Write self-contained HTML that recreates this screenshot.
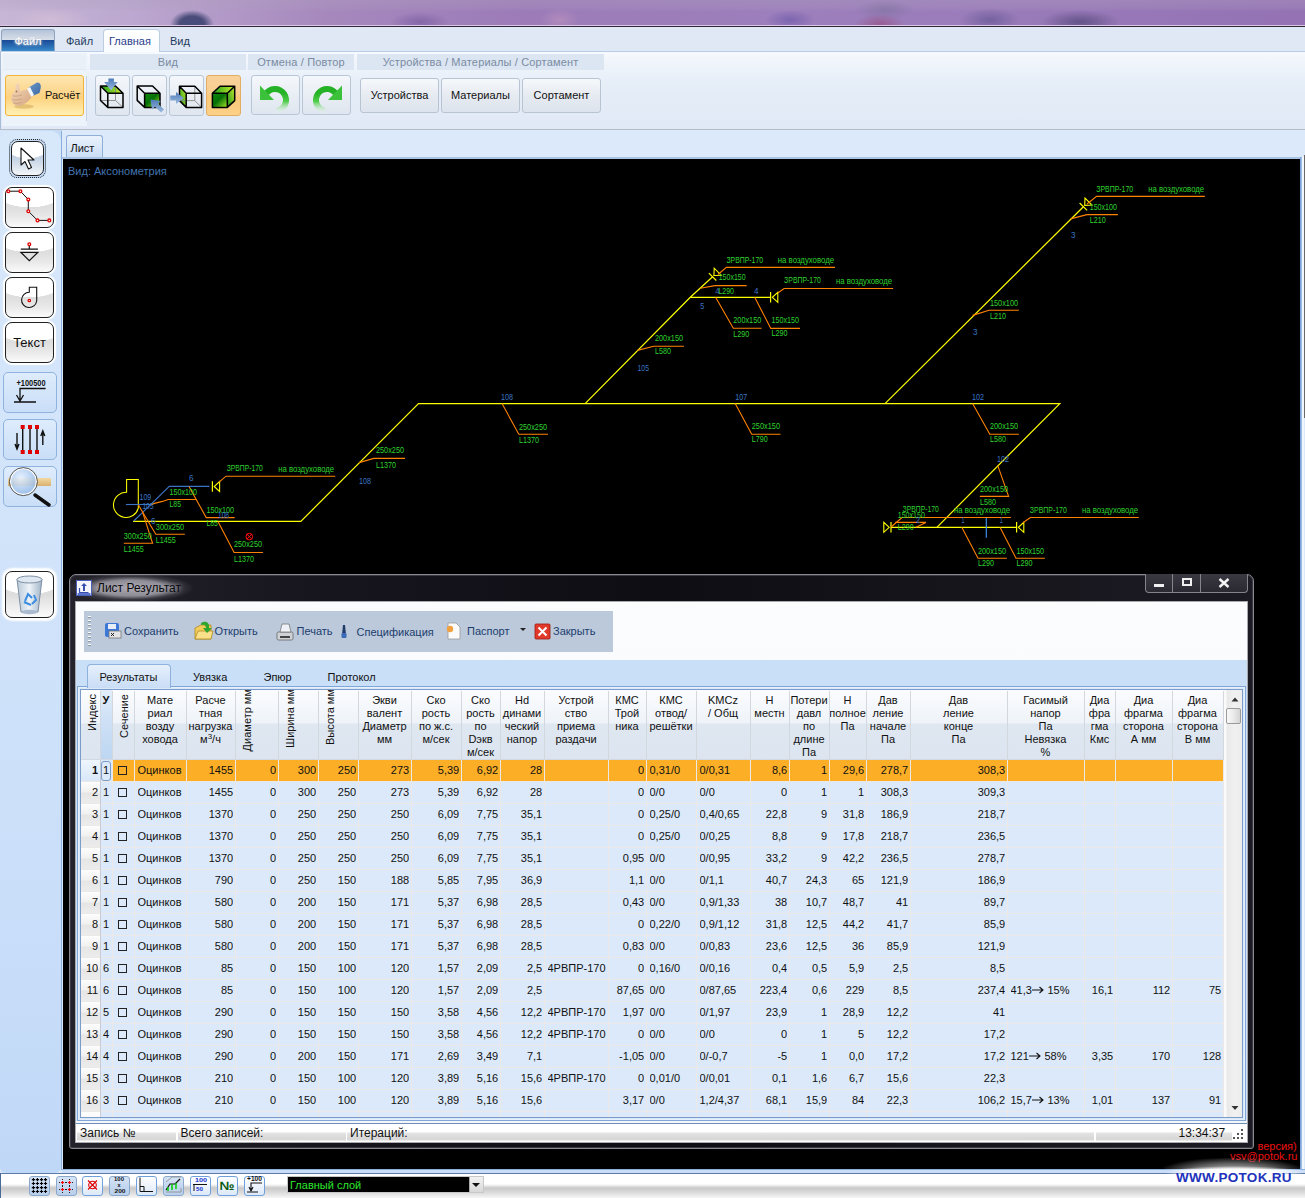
<!DOCTYPE html>
<html><head><meta charset="utf-8">
<style>
*{box-sizing:border-box;margin:0;padding:0}
html,body{width:1305px;height:1198px;overflow:hidden;background:#dbe7f6;font-family:"Liberation Sans",sans-serif;font-size:12px;color:#000}
.a{position:absolute}
#wall{left:0;top:0;width:1305px;height:27px;background:
radial-gradient(ellipse 22px 14px at 192px 24px,#474c7a 0%,#4a4c7a 55%,rgba(90,80,130,0) 100%),
radial-gradient(ellipse 30px 10px at 420px 22px,rgba(120,90,160,0.7) 0%,rgba(120,90,160,0) 100%),
radial-gradient(ellipse 20px 12px at 560px 20px,rgba(190,150,190,0.6) 0%,rgba(190,150,190,0) 100%),
radial-gradient(ellipse 25px 10px at 790px 20px,rgba(110,90,170,0.7) 0%,rgba(110,90,170,0) 100%),
radial-gradient(ellipse 25px 10px at 880px 24px,rgba(150,70,120,0.6) 0%,rgba(150,70,120,0) 100%),
radial-gradient(ellipse 30px 10px at 885px 10px,rgba(120,110,150,0.5) 0%,rgba(120,110,150,0) 100%),
radial-gradient(ellipse 30px 12px at 990px 20px,rgba(90,80,140,0.6) 0%,rgba(90,80,140,0) 100%),
radial-gradient(ellipse 40px 12px at 1080px 22px,rgba(80,70,120,0.75) 0%,rgba(80,70,120,0) 100%),
radial-gradient(ellipse 40px 12px at 50px 20px,rgba(215,195,215,0.6) 0%,rgba(215,195,215,0) 100%),
linear-gradient(rgba(175,160,190,0.35) 0%,rgba(175,160,190,0.2) 30%,rgba(0,0,0,0) 45%),
linear-gradient(90deg,#c8b6d6 0%,#bca8d0 10%,#a688bd 25%,#9c7bb8 40%,#9c7fbc 60%,#9a7cba 75%,#9472b4 100%);
border-bottom:1px solid #2e2838;box-shadow:inset 0 -1px 0 #dcc8e6}
#tabs{left:0;top:27px;width:1305px;height:24px;background:#dfe8f4}
#rib{left:0;top:51px;width:1305px;height:79px;border-left:1px solid #a9bdd8;background:linear-gradient(#f6f9fd 0%,#e6eef8 40%,#e0e9f5 100%);border-top:1px solid #b9cde6;border-bottom:1px solid #b4bcc6}
#side{left:0;top:130px;width:62px;height:1040px;background:linear-gradient(90deg,#d6e6fa,#c3d9f4)}
#canvasbg{left:62px;top:130px;width:1243px;height:1040px;background:#dbe9fa}
#canvas{left:63px;top:159px;width:1237px;height:1011px;background:#000}
#bottom{left:0;top:1170px;width:1305px;height:28px;background:linear-gradient(#ffffff,#f0f0f0 60%,#d8d8d8);border-top:2px solid #6f8fb8}

.grphd{top:54px;height:16px;background:#dce6f2;color:#7a8ba3;font-size:11px;text-align:center;line-height:17px;letter-spacing:0.15px}
.rbtn{top:75px;width:35px;height:41px;border:1px solid #b9c6d6;border-radius:3px;background:linear-gradient(#f4f7fb,#e9eef5 50%,#dfe6ef)}
.dbtn{top:78px;width:79px;height:35px;border:1px solid #b9c4d2;border-radius:3px;background:linear-gradient(#f6f8fb,#e6ebf2 50%,#dde4ed);font-size:11px;line-height:33px;text-align:center;color:#111}

.sb{left:5px;width:49px;height:41px;border:1.5px solid #222;border-radius:7px;background:radial-gradient(ellipse 80% 50% at 50% 0%,#ffffff 98%,rgba(255,255,255,0) 100%),linear-gradient(#e4e4e4 0%,#dedede 50%,#e9e9e9 75%,#fbfbfb 100%);box-shadow:0 0 1px 2px #fff}
.sb2{left:3px;width:54px;height:41px;border:1px solid #8fb3dc;border-radius:5px;background:linear-gradient(#deecfc,#c9def7)}

.th{top:0;height:69px;overflow:hidden}
.ht{position:absolute;left:0;right:0;top:3.5px;text-align:center;font-size:11px;line-height:13px;color:#111;white-space:nowrap}
.ht sup{font-size:8px;line-height:0;vertical-align:4px}
.vt{position:absolute;left:6px;top:3.5px;transform-origin:0 0;transform:rotate(-90deg) translate(-100%,0);white-space:nowrap;font-size:11px;line-height:13px;color:#111;text-align:right}
.td{height:21px;line-height:21px;font-size:11px;color:#111;white-space:nowrap;overflow:hidden}
.tb{top:625px;font-size:11px;color:#1d3d6e}
.sp{top:1124px;height:17px;background:linear-gradient(#ffffff 0%,#ffffff 45%,#e3e3e3 55%,#d6d6d6 90%,#f4f4f4 100%)}
.bb{top:1176px;width:21px;height:20px;border:1px solid #6fa0dc;border-radius:3px;background:linear-gradient(#ffffff,#eef4fc 50%,#dce9f8)}
.bb.dk{border-color:#8aa8cc;background:linear-gradient(#d6e4f6,#c4d7f0 50%,#b9cfeb)}
</style></head><body>
<div id="wall" class="a"></div>
<div id="tabs" class="a"></div>
<div id="rib" class="a"></div>

<!-- ribbon tabs -->
<div class="a" style="left:1px;top:29px;width:54px;height:22px;border-radius:3px 3px 0 0;background:linear-gradient(#b4c3d8 0%,#d8dfe8 48%,#1c4c98 50%,#2a6fb6 80%,#3a8cc8 100%);border:1px solid #8ea3bd;border-bottom:none"></div>
<div class="a" style="left:1px;top:34.5px;width:54px;text-align:center;color:#fff;font-size:11px;text-shadow:0 0 2px #9ab,0 0 3px #fff">Файл</div>
<div class="a" style="left:66px;top:35px;color:#1f3a5e;font-size:11px">Файл</div>
<div class="a" style="left:103px;top:29px;width:57px;height:23px;border-radius:4px 4px 0 0;background:linear-gradient(#ffffff,#f8fbff);border:1px solid #bccde2;border-bottom:none"></div>
<div class="a" style="left:109px;top:35px;color:#2b3f8a;font-size:11px">Главная</div>
<div class="a" style="left:170px;top:35px;color:#1f3a5e;font-size:11px">Вид</div>
<!-- ribbon groups -->
<div class="a" style="left:2px;top:53px;width:85px;height:73px;background:#edf3fa"></div>
<div class="a" style="left:3px;top:54px;width:83px;height:16px;background:#e9f0f8;border-bottom:1px solid #e3eaf3"></div>
<div class="a" style="left:86px;top:76px;width:1px;height:45px;background:#c7d3e2"></div>
<div class="a grphd" style="left:90px;width:156px">Вид</div>
<div class="a grphd" style="left:248px;width:106px">Отмена / Повтор</div>
<div class="a grphd" style="left:357px;width:247px">Устройства / Материалы / Сортамент</div>
<div class="a" style="left:5px;top:75px;width:79px;height:41px;border:1px solid #f2b53a;border-radius:3px;background:linear-gradient(#fde6b2,#fdd58a 45%,#fdd27f 55%,#fff0b4)"></div>
<svg class="a" style="left:9px;top:81px" width="34" height="30" viewBox="0 0 34 30">
 <defs><linearGradient id="hand" x1="0" y1="0" x2="1" y2="1"><stop offset="0" stop-color="#f6dcc0"/><stop offset="1" stop-color="#d4a47e"/></linearGradient>
 <linearGradient id="slv" x1="0" y1="0" x2="1" y2="1"><stop offset="0" stop-color="#6d98c8"/><stop offset="1" stop-color="#3d6aa4"/></linearGradient></defs>
 <ellipse cx="15" cy="25.5" rx="10" ry="2.2" fill="rgba(160,110,20,0.28)"/>
 <path d="M19.5 7.5 C16 9 13 10 11 10 L10.5 4.5 C10.3 2 7 2 6.6 4.3 L6 11 C3 12 1.8 15 2.3 19 C3 23 7 25.3 11 24.8 C15 24 19.5 20.5 23 15.5 Z" fill="url(#hand)"/>
 <path d="M3.5 14.8 C7 15.5 10 15 13 13.8 M3.3 18.5 C7 19.3 10 19 13 17.8 M4.5 22 C7.5 22.8 10 22.3 12.5 21.2" stroke="#c29872" stroke-width="0.7" fill="none"/>
 <circle cx="7.5" cy="10.5" r="0.9" fill="#a87050"/>
 <path d="M19.5 6.5 L28 1.5 C31 1 32.5 4 31.5 8 L30.5 12 L24 14.8 Z" fill="url(#slv)"/>
 <path d="M18 7.8 L21 6 L25 14 L22.3 15.8 Z" fill="#f4f7fb"/>
</svg>
<div class="a" style="left:45px;top:89px;font-size:11px;color:#111">Расчёт</div>
<div class="a rbtn" style="left:95px"></div>
<div class="a rbtn" style="left:132px"></div>
<div class="a rbtn" style="left:169px"></div>
<div class="a rbtn" style="left:206px;background:linear-gradient(#f9d29b,#f8cd8e 45%,#fbc878 55%,#fcd189);border-color:#e3ad62"></div>
<svg class="a" style="left:95px;top:75px" width="150" height="42" viewBox="0 0 150 42">
 <defs>
  <linearGradient id="gr" x1="0" y1="0" x2="1" y2="1"><stop offset="0" stop-color="#0c8a0c"/><stop offset="0.45" stop-color="#067006"/><stop offset="1" stop-color="#a8e82a"/></linearGradient>
  <linearGradient id="gr2" x1="0" y1="0" x2="1" y2="0"><stop offset="0" stop-color="#18a018"/><stop offset="1" stop-color="#d0f030"/></linearGradient>
  <linearGradient id="gr3" x1="0" y1="1" x2="1" y2="0"><stop offset="0" stop-color="#18901a"/><stop offset="1" stop-color="#c8f030"/></linearGradient>
  <linearGradient id="ar" x1="0" y1="0" x2="0" y2="1"><stop offset="0" stop-color="#4d7ab8"/><stop offset="1" stop-color="#9dbce0"/></linearGradient>
 </defs>
 <!-- btn1 -->
 <path d="M5.5 11 L20.5 11 L28 18.3 L12.8 18.3 Z" fill="url(#gr2)"/>
 <g fill="none" stroke="#888" stroke-width="0.9"><path d="M5.5 25.5 L20.5 25.5 L28 32.4 M20.5 11 L20.5 25.5"/></g>
 <g fill="none" stroke="#000" stroke-width="1.5" stroke-linejoin="round"><path d="M5.5 11 L20.5 11 L28 18.3 L28 32.4 L12.8 32.4 L5.5 25.5 Z M12.8 18.3 L28 18.3 M12.8 18.3 L12.8 32.4 M5.5 11 L12.8 18.3"/></g>
 <path d="M13.4 3.5 L18.9 3.5 L18.9 7 L22.6 7 L16 15.5 L9.2 7 L13.4 7 Z" fill="url(#ar)"/>
 <!-- btn2 -->
 <path d="M49.6 18.3 L65 18.3 L65 32.4 L49.6 32.4 Z" fill="url(#gr)"/>
 <g fill="none" stroke="#000" stroke-width="1.5" stroke-linejoin="round"><path d="M42.2 11 L57.5 11 L65 18.3 L65 32.4 L49.6 32.4 L42.2 25.4 Z M49.6 18.3 L65 18.3 M49.6 18.3 L49.6 32.4 M42.2 11 L49.6 18.3"/></g>
 <path d="M55.5 24.5 L66 26 L63 28.8 L69 34.5 L66 37.5 L60 31.8 L57 34.8 Z" fill="url(#ar)"/>
 <!-- btn3 -->
 <path d="M84.5 11.2 L91.2 18.3 L91.2 32.4 L84.5 25.6 Z" fill="url(#gr3)"/>
 <g fill="none" stroke="#888" stroke-width="0.9"><path d="M84.5 25.6 L99.8 25.6 L106.6 32.4 M99.8 11.2 L99.8 25.6"/></g>
 <g fill="none" stroke="#000" stroke-width="1.5" stroke-linejoin="round"><path d="M84.5 11.2 L99.8 11.2 L106.6 18.3 L106.6 32.4 L91.2 32.4 L84.5 25.6 Z M91.2 18.3 L106.6 18.3 M91.2 18.3 L91.2 32.4 M84.5 11.2 L91.2 18.3"/></g>
 <path d="M75.3 20.5 L81 20.5 L81 17 L88.8 23 L81 29 L81 25.5 L75.3 25.5 Z" fill="url(#ar)"/>
 <!-- btn4 -->
 <path d="M117.4 18.3 L125 11.2 L139.7 11.2 L132.3 18.3 Z" fill="url(#gr2)"/>
 <path d="M132.3 18.3 L139.7 11.2 L139.7 25.6 L132.3 32.4 Z" fill="url(#gr3)"/>
 <path d="M117.4 18.3 L132.3 18.3 L132.3 32.4 L117.4 32.4 Z" fill="url(#gr)"/>
 <g fill="none" stroke="#000" stroke-width="1.5" stroke-linejoin="round"><path d="M117.4 18.3 L125 11.2 L139.7 11.2 L139.7 25.6 L132.3 32.4 L117.4 32.4 Z M117.4 18.3 L132.3 18.3 L139.7 11.2 M132.3 18.3 L132.3 32.4"/></g>
</svg>
<div class="a rbtn" style="left:251px;width:49px;height:40px"></div>
<div class="a rbtn" style="left:302px;width:49px;height:40px"></div>
<svg class="a" style="left:251px;top:75px" width="100" height="42" viewBox="0 0 100 42">
 <defs><linearGradient id="und" x1="0" y1="0" x2="0" y2="1"><stop offset="0.25" stop-color="#26b226"/><stop offset="0.55" stop-color="#4ccc48"/><stop offset="0.95" stop-color="#e8f4ea" stop-opacity="0.2"/></linearGradient></defs>
 <g id="undo"><path d="M11.9 18 A14 14 0 1 1 26.4 38.8 L25.4 32.9 A8 8 0 1 0 17.1 21 Z" fill="url(#und)"/>
 <path d="M9 10.5 L9 25 L23 25 Z" fill="#3cc23a"/></g>
 <g transform="translate(100,0) scale(-1,1)"><path d="M11.9 18 A14 14 0 1 1 26.4 38.8 L25.4 32.9 A8 8 0 1 0 17.1 21 Z" fill="url(#und)"/>
 <path d="M9 10.5 L9 25 L23 25 Z" fill="#3cc23a"/></g>
</svg>
<div class="a dbtn" style="left:360px">Устройства</div>
<div class="a dbtn" style="left:441px">Материалы</div>
<div class="a dbtn" style="left:522px">Сортамент</div>

<div id="side" class="a"></div>
<div id="canvasbg" class="a"></div>

<div class="a" style="left:0;top:131px;width:61px;height:1042px;border-radius:10px 10px 6px 6px;background:linear-gradient(#d8e8fb 0%,#d0e3fa 45%,#c9def9 75%,#c0d8f7 100%)"></div>
<div class="a" style="left:61px;top:131px;width:1px;height:1039px;background:#8aaedc"></div>
<div class="a" style="left:9px;top:139px;width:37px;height:39px;border:1px dotted #222;border-radius:8px;background:#c4daf5"></div>
<div class="a" style="left:11px;top:141px;width:33px;height:35px;border:1.5px solid #222;border-radius:7px;background:radial-gradient(ellipse 80% 50% at 50% 0%,#ffffff 98%,rgba(255,255,255,0) 100%),linear-gradient(#bccee2 0%,#c4d3e4 50%,#dbe4ee 75%,#f4f7fa 100%)"></div>
<svg class="a" style="left:11px;top:141px" width="33" height="35" viewBox="0 0 33 35"><path d="M10 7 L10 24 L14 20.5 L17.5 28 L20.5 26.5 L17 19 L23 19 Z" fill="#fff" stroke="#111" stroke-width="1.1" stroke-linejoin="round"/></svg>
<div class="a sb" style="top:187px"></div>
<div class="a sb" style="top:232px"></div>
<div class="a sb" style="top:277px"></div>
<div class="a sb" style="top:322px;font-size:13px;text-align:center;line-height:39px;color:#111">Текст</div>
<svg class="a" style="left:0;top:180px" width="60" height="140" viewBox="0 0 60 140">
 <g fill="none" stroke="#111" stroke-width="1"><path d="M8.3 11.2 L20.4 11.2 L28.3 19.6 L28.3 31.2 L37.5 40.4 L49.3 40.4"/>
 <path d="M29.3 64.3 L29.3 69.2 M20.8 69.2 L37.9 69.2 M20.8 72.3 L37.9 72.3 L29.3 80.6 Z" stroke-width="1.2"/>
 <path d="M29.3 112.3 L29.3 107.3 L36.7 107.3 L36.7 121 A7.6 7.6 0 1 1 29.3 112.3 Z" stroke-width="1.1"/></g>
 <g fill="#fff" stroke="#e00000" stroke-width="1.3">
 <circle cx="8.3" cy="11.2" r="1.4"/><circle cx="20.4" cy="11.2" r="1.4"/><circle cx="28.3" cy="19.6" r="1.4"/><circle cx="28.3" cy="31.2" r="1.4"/><circle cx="37.5" cy="40.4" r="1.4"/><circle cx="49.3" cy="40.4" r="1.4"/>
 <circle cx="29.3" cy="64.3" r="1.4"/><circle cx="29.3" cy="120.5" r="1.2"/></g>
</svg>
<div class="a sb2" style="top:372px"></div>
<div class="a sb2" style="top:419px"></div>
<div class="a sb2" style="top:466px"></div>
<svg class="a" style="left:0;top:370px" width="60" height="140" viewBox="0 0 60 140">
 <text x="16.5" y="16" font-family="Liberation Sans" font-size="8.5" font-weight="bold" fill="#111" textLength="29" lengthAdjust="spacingAndGlyphs">+100500</text>
 <g stroke="#111" stroke-width="1.3" fill="none"><path d="M20 32 L20 18.5 L45.6 18.5 M14 32 L36 32 M20 31 L16.5 25 M20 31 L23.5 25"/></g>
 <g stroke="#111" stroke-width="1.4" fill="none"><path d="M22.7 57 L22.7 82 M30 57 L30 82 M37 57 L37 82 M17 63 L17 79 M15 74 L17 79 L19 74 M42.8 61 L42.8 75 M40.8 66 L42.8 61 L44.8 66"/></g>
 <g fill="#e00000"><rect x="20.7" y="55" width="4" height="4"/><rect x="28" y="55" width="4" height="4"/><rect x="35" y="55" width="4" height="4"/><rect x="20.7" y="80" width="4" height="4"/><rect x="28" y="80" width="4" height="4"/><rect x="35" y="80" width="4" height="4"/></g>
 <defs><linearGradient id="rul" x1="0" y1="0" x2="0" y2="1"><stop offset="0" stop-color="#f3d9a0"/><stop offset="1" stop-color="#d9b070"/></linearGradient>
 <radialGradient id="lens" cx="0.4" cy="0.35" r="0.7"><stop offset="0" stop-color="#e8f2ff" stop-opacity="0.85"/><stop offset="1" stop-color="#8fb6e6" stop-opacity="0.85"/></radialGradient></defs>
 <rect x="8" y="108" width="43" height="8" fill="url(#rul)"/>
 <path d="M35 125 L49 135" stroke="#111" stroke-width="3.5" stroke-linecap="round"/>
 <circle cx="23.4" cy="111.6" r="13" fill="url(#lens)" stroke="#fff" stroke-width="1.5"/>
 <circle cx="23.4" cy="111.6" r="14" fill="none" stroke="#444" stroke-width="0.9"/>
</svg>
<div class="a" style="left:4px;top:570px;width:51px;height:49px;border-radius:8px;background:#fff;box-shadow:0 0 2px 2px #fff"></div>
<div class="a" style="left:5px;top:571px;width:49px;height:47px;border:1.5px solid #222;border-radius:7px;background:radial-gradient(ellipse 80% 50% at 50% 0%,#ffffff 98%,rgba(255,255,255,0) 100%),linear-gradient(#e2e2e2 0%,#dddddd 50%,#ececec 75%,#fbfbfb 100%)"></div>
<svg class="a" style="left:5px;top:571px" width="49" height="47" viewBox="0 0 49 47">
 <defs><linearGradient id="bin" x1="0" y1="0" x2="1" y2="0"><stop offset="0" stop-color="#b9c9d8"/><stop offset="0.5" stop-color="#eef3f8"/><stop offset="1" stop-color="#9fb3c6"/></linearGradient></defs>
 <path d="M12 8 L37 8 L33 41 L16 41 Z" fill="url(#bin)" stroke="#7d8fa3" stroke-width="1"/>
 <ellipse cx="24.5" cy="8.5" rx="12.5" ry="3.5" fill="#dfe8f1" stroke="#7d8fa3" stroke-width="1"/>
 <ellipse cx="24.5" cy="41" rx="8.5" ry="2.2" fill="#aabbd0"/>
 <path d="M20 30 L23 23 L27 27 M27 33 L31 29 L29 24 M19 31 L26 34" stroke="#3d8de0" stroke-width="2" fill="none"/>
</svg>
<!-- canvas tab -->
<div class="a" style="left:66px;top:135px;width:37px;height:24px;border:1px solid #8fb0d8;border-bottom:none;border-radius:3px 3px 0 0;background:linear-gradient(#eaf2fc,#c8dcf4)"></div>
<div class="a" style="left:70.5px;top:142px;font-size:11px;color:#111">Лист</div>
<div class="a" style="left:62px;top:157px;width:1243px;height:2px;background:#a9c3e4"></div>

<div id="canvas" class="a"></div>
<div class="a" style="left:1300px;top:157px;width:2px;height:1013px;background:linear-gradient(90deg,#6f9ad6,#a8c6ec)"></div>
<div class="a" style="left:1302px;top:157px;width:2px;height:1013px;background:#f2f7fd"></div>
<div class="a" style="left:1304px;top:155px;width:1px;height:263px;background:#6a6a6a"></div>
<div class="a" style="left:68px;top:165px;font-size:11px;color:#4275b0">Вид: Аксонометрия</div>
<!--DRAW--><svg class="a" style="left:0;top:0" width="1305" height="1198" viewBox="0 0 1305 1198" font-family="Liberation Sans"><path d="M133.1 521.4 L300.8 521.4 L418.5 403.6 L1059.8 403.6 L936.9 527.3" stroke="#ffff00" stroke-width="1.2" fill="none"/><path d="M585.1 403.6 L690.3 297.3 L712.6 276.8" stroke="#ffff00" stroke-width="1.2" fill="none"/><path d="M690.3 297.3 L770.6 297.3" stroke="#ffff00" stroke-width="1.2" fill="none"/><path d="M885 403.6 L1083.4 206.7" stroke="#ffff00" stroke-width="1.2" fill="none"/><path d="M891 527.3 L1016.6 527.3" stroke="#ffff00" stroke-width="1.2" fill="none"/><path d="M126.6 492.3 L126.6 479.5 L138.3 479.5 L138.3 508 A12.6 12.6 0 1 1 126.6 492.3 Z" stroke="#ffff00" stroke-width="1.05" fill="none"/><path d="M212.4 491.8 L212.4 481.2" stroke="#ffff00" stroke-width="1.2" fill="none"/><path d="M214.2 486.5 L219.6 491.5 L219.6 481.5 Z" stroke="#ffff00" stroke-width="1.1" fill="none"/><path d="M770.6 302.6 L770.6 292.0" stroke="#ffff00" stroke-width="1.2" fill="none"/><path d="M772.4 297.3 L777.8 302.3 L777.8 292.3 Z" stroke="#ffff00" stroke-width="1.1" fill="none"/><path d="M716.3476659402887 280.5476659402887 L708.8523340597113 273.0523340597113" stroke="#ffff00" stroke-width="1.2" fill="none"/><path d="M713.9 275.5 L721.2 275.2 L714.2 268.2 Z" stroke="#ffff00" stroke-width="1.1" fill="none"/><path d="M1087.1476659402888 210.4476659402887 L1079.6523340597114 202.9523340597113" stroke="#ffff00" stroke-width="1.2" fill="none"/><path d="M1084.7 205.4 L1092.0 205.1 L1085.0 198.1 Z" stroke="#ffff00" stroke-width="1.1" fill="none"/><path d="M891.0 522.0 L891.0 532.5999999999999" stroke="#ffff00" stroke-width="1.2" fill="none"/><path d="M889.2 527.3 L883.8 522.3 L883.8 532.3 Z" stroke="#ffff00" stroke-width="1.1" fill="none"/><path d="M1016.6 532.5999999999999 L1016.6 522.0" stroke="#ffff00" stroke-width="1.2" fill="none"/><path d="M1018.4 527.3 L1023.8 532.3 L1023.8 522.3 Z" stroke="#ffff00" stroke-width="1.1" fill="none"/><path d="M125.9 504.5 L153.4 504.5" stroke="#3b74c4" stroke-width="1.1" fill="none"/><path d="M133.8 521 L169.3 486.4 L209.4 486.4" stroke="#3b74c4" stroke-width="1.1" fill="none"/><path d="M986.3 517.9 L986.3 537.8" stroke="#3a8ee8" stroke-width="1.2" fill="none"/><path d="M138.3 504.8 L155.8 534.2 L184.8 534.2" stroke="#ff8200" stroke-width="1.1" fill="none"/><path d="M142.4 511.6 L152.6 543.3 L123.8 543.3" stroke="#ff8200" stroke-width="1.1" fill="none"/><path d="M151.4 504.1 L162.4 501.4 L168.3 499.5 L196.6 499.5" stroke="#ff8200" stroke-width="1.1" fill="none"/><path d="M189 486.4 L206.2 517.6 L234.7 517.6" stroke="#ff8200" stroke-width="1.1" fill="none"/><path d="M218 521.4 L234.1 552.5 L262.9 552.5" stroke="#ff8200" stroke-width="1.1" fill="none"/><path d="M219.1 482.2 L226 476.2 L335.2 476.2" stroke="#ff8200" stroke-width="1.1" fill="none"/><path d="M359.1 462.6 L373.8 458.4 L405 458.4" stroke="#ff8200" stroke-width="1.1" fill="none"/><path d="M502 403.6 L518.8 434.2 L548 434.2" stroke="#ff8200" stroke-width="1.1" fill="none"/><path d="M735.2 403.6 L751.7 434.3 L780.5 434.3" stroke="#ff8200" stroke-width="1.1" fill="none"/><path d="M637.5 350.4 L653.6 346.2 L683.9 346.2" stroke="#ff8200" stroke-width="1.1" fill="none"/><path d="M718 274.5 L726.4 267.4 L835 267.4" stroke="#ff8200" stroke-width="1.1" fill="none"/><path d="M700.3 288.3 L714.9 285.6 L746.7 285.6" stroke="#ff8200" stroke-width="1.1" fill="none"/><path d="M777.8 293 L784.1 288.5 L893.1 288.5" stroke="#ff8200" stroke-width="1.1" fill="none"/><path d="M715.6 297.3 L733.3 328.2 L761.6 328.2" stroke="#ff8200" stroke-width="1.1" fill="none"/><path d="M754.7 297.3 L770.8 328.4 L800 328.4" stroke="#ff8200" stroke-width="1.1" fill="none"/><path d="M1087 204 L1096.6 196.4 L1204.8 196.4" stroke="#ff8200" stroke-width="1.1" fill="none"/><path d="M1070.6 218.9 L1086.9 214.6 L1117.9 214.6" stroke="#ff8200" stroke-width="1.1" fill="none"/><path d="M972.6 315.4 L989 310.3 L1018.8 310.3" stroke="#ff8200" stroke-width="1.1" fill="none"/><path d="M972.6 403.6 L989.8 434.2 L1018.8 434.2" stroke="#ff8200" stroke-width="1.1" fill="none"/><path d="M997.6 465.1 L1008.6 496.4 L979.8 496.4" stroke="#ff8200" stroke-width="1.1" fill="none"/><path d="M891 527 L902 517.5 L1010.9 517.5" stroke="#ff8200" stroke-width="1.1" fill="none"/><path d="M895.2 522.4 L925.9 522.4 L916.1 527.3" stroke="#ff8200" stroke-width="1.1" fill="none"/><path d="M961.8 527.3 L978 558.3 L1006.8 558.3" stroke="#ff8200" stroke-width="1.1" fill="none"/><path d="M1000 527.3 L1016 558.3 L1044.9 558.3" stroke="#ff8200" stroke-width="1.1" fill="none"/><path d="M1022.9 522.7 L1030.4 517.5 L1138.8 517.5" stroke="#ff8200" stroke-width="1.1" fill="none"/><g stroke="#ff1010" stroke-width="1" fill="none"><circle cx="249.3" cy="536.6" r="3.3"/><path d="M246.6 533.9 L252 539.3 M252 533.9 L246.6 539.3"/></g><text x="123.8" y="538.7" fill="#2fd22f" font-size="8.6" textLength="28" lengthAdjust="spacingAndGlyphs">300x250</text><text x="123.8" y="551.7" fill="#2fd22f" font-size="8.6" textLength="20" lengthAdjust="spacingAndGlyphs">L1455</text><text x="155.8" y="529.5" fill="#2fd22f" font-size="8.6" textLength="28.4" lengthAdjust="spacingAndGlyphs">300x250</text><text x="155.8" y="542.6" fill="#2fd22f" font-size="8.6" textLength="20" lengthAdjust="spacingAndGlyphs">L1455</text><text x="169.5" y="494.6" fill="#2fd22f" font-size="8.6" textLength="27.6" lengthAdjust="spacingAndGlyphs">150x100</text><text x="169.5" y="507.4" fill="#2fd22f" font-size="8.6" textLength="11.5" lengthAdjust="spacingAndGlyphs">L85</text><text x="206.4" y="512.5" fill="#2fd22f" font-size="8.6" textLength="27.7" lengthAdjust="spacingAndGlyphs">150x100</text><text x="206.4" y="525.7" fill="#2fd22f" font-size="8.6" textLength="11.5" lengthAdjust="spacingAndGlyphs">L85</text><text x="226.7" y="471.2" fill="#2fd22f" font-size="8.6" textLength="36.2" lengthAdjust="spacingAndGlyphs">ЗРВПР-170</text><text x="278.2" y="471.7" fill="#2fd22f" font-size="8.6" textLength="56" lengthAdjust="spacingAndGlyphs">на воздуховоде</text><text x="234" y="547.2" fill="#2fd22f" font-size="8.6" textLength="28" lengthAdjust="spacingAndGlyphs">250x250</text><text x="234" y="561.7" fill="#2fd22f" font-size="8.6" textLength="20" lengthAdjust="spacingAndGlyphs">L1370</text><text x="376" y="453.2" fill="#2fd22f" font-size="8.6" textLength="28" lengthAdjust="spacingAndGlyphs">250x250</text><text x="376" y="467.7" fill="#2fd22f" font-size="8.6" textLength="20" lengthAdjust="spacingAndGlyphs">L1370</text><text x="519" y="429.5" fill="#2fd22f" font-size="8.6" textLength="28" lengthAdjust="spacingAndGlyphs">250x250</text><text x="519" y="442.6" fill="#2fd22f" font-size="8.6" textLength="20" lengthAdjust="spacingAndGlyphs">L1370</text><text x="655" y="341.2" fill="#2fd22f" font-size="8.6" textLength="28" lengthAdjust="spacingAndGlyphs">200x150</text><text x="655" y="354.2" fill="#2fd22f" font-size="8.6" textLength="16" lengthAdjust="spacingAndGlyphs">L580</text><text x="726.4" y="262.6" fill="#2fd22f" font-size="8.6" textLength="36.7" lengthAdjust="spacingAndGlyphs">ЗРВПР-170</text><text x="777.8" y="263.2" fill="#2fd22f" font-size="8.6" textLength="56.3" lengthAdjust="spacingAndGlyphs">на воздуховоде</text><text x="718.7" y="280.4" fill="#2fd22f" font-size="8.6" textLength="27" lengthAdjust="spacingAndGlyphs">150x150</text><text x="718.5" y="293.7" fill="#2fd22f" font-size="8.6" textLength="15.5" lengthAdjust="spacingAndGlyphs">L290</text><text x="784.1" y="283.2" fill="#2fd22f" font-size="8.6" textLength="36.8" lengthAdjust="spacingAndGlyphs">ЗРВПР-170</text><text x="835.9" y="283.7" fill="#2fd22f" font-size="8.6" textLength="56.3" lengthAdjust="spacingAndGlyphs">на воздуховоде</text><text x="733.3" y="323.3" fill="#2fd22f" font-size="8.6" textLength="28" lengthAdjust="spacingAndGlyphs">200x150</text><text x="733.3" y="336.5" fill="#2fd22f" font-size="8.6" textLength="16" lengthAdjust="spacingAndGlyphs">L290</text><text x="771.5" y="323.4" fill="#2fd22f" font-size="8.6" textLength="27.5" lengthAdjust="spacingAndGlyphs">150x150</text><text x="771.5" y="336.4" fill="#2fd22f" font-size="8.6" textLength="16" lengthAdjust="spacingAndGlyphs">L290</text><text x="751.7" y="429.3" fill="#2fd22f" font-size="8.6" textLength="28.3" lengthAdjust="spacingAndGlyphs">250x150</text><text x="751.7" y="442.2" fill="#2fd22f" font-size="8.6" textLength="16" lengthAdjust="spacingAndGlyphs">L790</text><text x="990" y="305.6" fill="#2fd22f" font-size="8.6" textLength="28" lengthAdjust="spacingAndGlyphs">150x100</text><text x="990" y="318.7" fill="#2fd22f" font-size="8.6" textLength="16" lengthAdjust="spacingAndGlyphs">L210</text><text x="990" y="429.2" fill="#2fd22f" font-size="8.6" textLength="28" lengthAdjust="spacingAndGlyphs">200x150</text><text x="990" y="442.2" fill="#2fd22f" font-size="8.6" textLength="16" lengthAdjust="spacingAndGlyphs">L580</text><text x="1096.3" y="191.5" fill="#2fd22f" font-size="8.6" textLength="36.8" lengthAdjust="spacingAndGlyphs">ЗРВПР-170</text><text x="1148.3" y="192.0" fill="#2fd22f" font-size="8.6" textLength="55.8" lengthAdjust="spacingAndGlyphs">на воздуховоде</text><text x="1089.7" y="209.5" fill="#2fd22f" font-size="8.6" textLength="27.3" lengthAdjust="spacingAndGlyphs">150x100</text><text x="1089.7" y="222.6" fill="#2fd22f" font-size="8.6" textLength="16" lengthAdjust="spacingAndGlyphs">L210</text><text x="980" y="491.6" fill="#2fd22f" font-size="8.6" textLength="28" lengthAdjust="spacingAndGlyphs">200x150</text><text x="980" y="504.8" fill="#2fd22f" font-size="8.6" textLength="16" lengthAdjust="spacingAndGlyphs">L580</text><text x="902.6" y="512.4" fill="#2fd22f" font-size="8.6" textLength="36.2" lengthAdjust="spacingAndGlyphs">ЗРВПР-170</text><text x="897.7" y="517.6" fill="#2fd22f" font-size="8.6" textLength="27.3" lengthAdjust="spacingAndGlyphs">150x150</text><text x="897.7" y="530.2" fill="#2fd22f" font-size="8.6" textLength="16" lengthAdjust="spacingAndGlyphs">L290</text><text x="954" y="512.7" fill="#2fd22f" font-size="8.6" textLength="56" lengthAdjust="spacingAndGlyphs">на воздуховоде</text><text x="978" y="553.5" fill="#2fd22f" font-size="8.6" textLength="28" lengthAdjust="spacingAndGlyphs">200x150</text><text x="978" y="566.4" fill="#2fd22f" font-size="8.6" textLength="16" lengthAdjust="spacingAndGlyphs">L290</text><text x="1016.4" y="553.6" fill="#2fd22f" font-size="8.6" textLength="27.7" lengthAdjust="spacingAndGlyphs">150x150</text><text x="1016.4" y="566.4" fill="#2fd22f" font-size="8.6" textLength="16" lengthAdjust="spacingAndGlyphs">L290</text><text x="1029.8" y="512.5" fill="#2fd22f" font-size="8.6" textLength="37" lengthAdjust="spacingAndGlyphs">ЗРВПР-170</text><text x="1081.9" y="513.0" fill="#2fd22f" font-size="8.6" textLength="56.3" lengthAdjust="spacingAndGlyphs">на воздуховоде</text><text x="189" y="481.4" fill="#3b74c4" font-size="8.6" textLength="4.5" lengthAdjust="spacingAndGlyphs">6</text><text x="139.5" y="499.5" fill="#3b74c4" font-size="8.6" textLength="11.8" lengthAdjust="spacingAndGlyphs">109</text><text x="142.4" y="508.8" fill="#3b74c4" font-size="8.6" textLength="11.2" lengthAdjust="spacingAndGlyphs">105</text><text x="151" y="524.2" fill="#3b74c4" font-size="8.6" textLength="4.5" lengthAdjust="spacingAndGlyphs">6</text><text x="218" y="517.7" fill="#3b74c4" font-size="8.6" textLength="11" lengthAdjust="spacingAndGlyphs">108</text><text x="359" y="483.6" fill="#3b74c4" font-size="8.6" textLength="12" lengthAdjust="spacingAndGlyphs">108</text><text x="501.1" y="399.5" fill="#3b74c4" font-size="8.6" textLength="12" lengthAdjust="spacingAndGlyphs">108</text><text x="637.5" y="371.4" fill="#3b74c4" font-size="8.6" textLength="11.5" lengthAdjust="spacingAndGlyphs">105</text><text x="700.3" y="309.2" fill="#3b74c4" font-size="8.6" textLength="4" lengthAdjust="spacingAndGlyphs">5</text><text x="754" y="293.7" fill="#3b74c4" font-size="8.6" textLength="4.5" lengthAdjust="spacingAndGlyphs">4</text><text x="715.2" y="293.7" fill="#3b74c4" font-size="8.6" textLength="4.5" lengthAdjust="spacingAndGlyphs">4</text><text x="735.2" y="399.5" fill="#3b74c4" font-size="8.6" textLength="12" lengthAdjust="spacingAndGlyphs">107</text><text x="1071" y="238.4" fill="#3b74c4" font-size="8.6" textLength="4.5" lengthAdjust="spacingAndGlyphs">3</text><text x="973" y="335.4" fill="#3b74c4" font-size="8.6" textLength="4.5" lengthAdjust="spacingAndGlyphs">3</text><text x="972.1" y="399.5" fill="#3b74c4" font-size="8.6" textLength="12" lengthAdjust="spacingAndGlyphs">102</text><text x="997" y="461.9" fill="#3b74c4" font-size="8.6" textLength="12" lengthAdjust="spacingAndGlyphs">102</text><text x="916" y="523.4" fill="#3b74c4" font-size="8.6" textLength="4" lengthAdjust="spacingAndGlyphs">2</text><text x="961.4" y="523.2" fill="#3b74c4" font-size="8.6" textLength="3" lengthAdjust="spacingAndGlyphs">1</text><text x="999.8" y="523.2" fill="#3b74c4" font-size="8.6" textLength="3" lengthAdjust="spacingAndGlyphs">1</text></svg><!--/DRAW-->
<div class="a" style="left:1257.5px;top:1140px;font-size:11px;color:#ee1111">версия)</div>
<div class="a" style="left:1230px;top:1150px;font-size:11px;color:#ee1111">vsv@potok.ru</div>
<!--DLG-->
<div class="a" style="left:69px;top:574px;width:1185px;height:575px;border-radius:7px 7px 3px 3px;background:linear-gradient(90deg,#24222a 0%,#17151d 20%,#0f0d14 50%,#17151c 75%,#1c1a22 100%);border:1px solid #8a8892;box-shadow:inset 0 0 0 1px #3a3840"></div>
<div class="a" style="left:68px;top:575px;width:126px;height:26px;background:radial-gradient(ellipse 50% 55% at 50% 50%,rgba(175,172,182,0.95) 0%,rgba(160,158,168,0.85) 55%,rgba(90,88,98,0.4) 80%,rgba(0,0,0,0) 100%)"></div>
<svg class="a" style="left:76px;top:580px" width="16" height="16" viewBox="0 0 16 16">
 <rect x="0.5" y="0.5" width="15" height="15" fill="#f4f6fc" stroke="#4a60b8"/>
 <rect x="1.5" y="13" width="13" height="2" fill="#5a72c8"/>
 <path d="M8 3 L5 6 L7 6 L7 11 L9 11 L9 6 L11 6 Z" fill="#3850b0"/>
 <path d="M3.5 8 L3.5 12.5 L12.5 12.5" stroke="#3850b0" stroke-width="1.2" fill="none"/>
</svg>
<div class="a" style="left:97px;top:580.5px;font-size:12px;color:#0a0a0a;text-shadow:0 0 4px #b8b6c0">Лист Результат</div>
<div class="a" style="left:1145px;top:574px;width:103px;height:19px;border:1px solid #85838c;border-top:none;border-radius:0 0 4px 4px;background:linear-gradient(#3a3842,#2a2830)"></div>
<div class="a" style="left:1172px;top:574px;width:1px;height:18px;background:#85838c"></div>
<div class="a" style="left:1200px;top:574px;width:1px;height:18px;background:#85838c"></div>
<div class="a" style="left:1154px;top:584px;width:10px;height:3px;background:#f0f0f0"></div>
<div class="a" style="left:1182px;top:578px;width:10px;height:8px;border:2px solid #f0f0f0;border-top-width:2px"></div>
<svg class="a" style="left:1218px;top:578px" width="12" height="10" viewBox="0 0 12 10"><path d="M1.5 1 L10.5 9 M10.5 1 L1.5 9" stroke="#f4f4f4" stroke-width="2.4"/></svg>
<div class="a" style="left:75px;top:601px;width:1173px;height:542px;border:1px solid #a9a9b0;background:linear-gradient(#fbfcfe 0%,#f2f6fb 100%)"></div>
<div class="a" style="left:76px;top:660px;width:1171px;height:461px;background:linear-gradient(#c9dff8,#d1e4fa)"></div>
<div class="a" style="left:84px;top:611px;width:529px;height:41px;background:#bbc9da"></div>
<div class="a" style="left:88px;top:616px;width:3px;height:31px;background:repeating-linear-gradient(#ffffff 0 1.5px,#8a98aa 1.5px 2px,transparent 2px 4px)"></div>
<svg class="a" style="left:84px;top:611px" width="529" height="41" viewBox="0 0 529 41">
 <rect x="21" y="12" width="14" height="14" rx="2" fill="#3c78d8"/>
 <rect x="24" y="13" width="8" height="5" fill="#e8eef8"/>
 <rect x="25" y="20" width="12" height="7" fill="#e4e4e4" stroke="#777" stroke-width="0.8"/>
 <path d="M27 22 L30 25 M30 22 L27 25" stroke="#111" stroke-width="0.9"/>
 <path d="M111 17 L117 14 L127 14 L127 28 L111 28 Z" fill="#f3cd5a" stroke="#b08a20" stroke-width="0.8"/>
 <path d="M111 28 L114 20 L129 20 L127 28 Z" fill="#fbe08a" stroke="#b08a20" stroke-width="0.8"/>
 <path d="M117 12 C122 9 126 12 125 17 L128 17 L123 22 L119 17 L122 17 C122 14 120 13 117 14 Z" fill="#2ea52e"/>
 <rect x="193" y="21" width="16" height="8" rx="1.5" fill="#cfd2d6" stroke="#666" stroke-width="0.8"/>
 <path d="M196 21 L198 13 L205 13 L207 21 Z" fill="#eef2f8" stroke="#777" stroke-width="0.8"/>
 <rect x="196" y="25" width="10" height="2" fill="#444"/>
 <path d="M259 14 L261 14 L262 24 L258 24 Z" fill="#223a6a"/><rect x="257.5" y="22" width="5" height="5" rx="1" fill="#3b6ab8"/>
 <path d="M364 12 L372 12 L376 16 L376 28 L364 28 Z" fill="#fbfbfb" stroke="#999" stroke-width="0.8"/>
 <circle cx="366" cy="18" r="3.2" fill="#f0a040"/>
 <path d="M436 17 L439 20 L442 17 Z" fill="#222"/>
 <rect x="451" y="13" width="15" height="15" rx="1" fill="#e23a2a" stroke="#a01a10" stroke-width="0.8"/>
 <path d="M454.5 16.5 L462.5 24.5 M462.5 16.5 L454.5 24.5" stroke="#fff" stroke-width="2"/>
</svg>
<div class="a tb" style="left:124px">Сохранить</div>
<div class="a tb" style="left:214.5px">Открыть</div>
<div class="a tb" style="left:296.5px">Печать</div>
<div class="a tb" style="left:356.5px;top:626px">Спецификация</div>
<div class="a tb" style="left:467px">Паспорт</div>
<div class="a tb" style="left:553px">Закрыть</div>
<div class="a" style="left:193px;top:671px;font-size:11px;color:#111">Увязка</div>
<div class="a" style="left:263.5px;top:671px;font-size:11px;color:#111">Эпюр</div>
<div class="a" style="left:327.5px;top:671px;font-size:11px;color:#111">Протокол</div>
<div class="a" style="left:77px;top:686px;width:1169px;height:435px;border:1px solid #7fa6d6;background:#d9e8fb;box-shadow:inset 0 0 0 1px #e6f0fc"></div>
<div class="a" style="left:80px;top:689px;width:1163px;height:429px;border:1px solid #7b9cc6;background:#dbe9fa;overflow:hidden">
<div class="a" style="left:0;top:0;width:1143px;height:69px;background:linear-gradient(#fbfcfe 0%,#eef3f9 48%,#dfe7f1 49%,#dce5f0 100%)"></div>
<div class="a th" style="left:-1.0px;width:20.0px;">
<div class="vt">Индекс</div>
</div>
<div class="a th" style="left:19.0px;width:12.0px;background:linear-gradient(#e2edf9 0%,#cfe1f6 40%,#bdd6f2 100%);">
<div class="ht"><b>У</b></div>
</div>
<div class="a th" style="left:31.0px;width:22.0px;">
<div class="vt">Сечение</div>
</div>
<div class="a th" style="left:53.0px;width:52.0px;">
<div class="ht">Мате<br>риал<br>возду<br>ховода</div>
</div>
<div class="a th" style="left:105.0px;width:49.0px;">
<div class="ht">Расче<br>тная<br>нагрузка<br>м<sup>3</sup>/ч</div>
</div>
<div class="a th" style="left:154.0px;width:43.0px;">
<div class="vt" style="top:-1.5px">Диаметр мм</div>
</div>
<div class="a th" style="left:197.0px;width:40.0px;">
<div class="vt" style="top:-1.5px">Ширина мм</div>
</div>
<div class="a th" style="left:237.0px;width:40.0px;">
<div class="vt" style="top:-1.5px">Высота мм</div>
</div>
<div class="a th" style="left:277.0px;width:53.0px;">
<div class="ht">Экви<br>валент<br>Диаметр<br>мм</div>
</div>
<div class="a th" style="left:330.0px;width:50.0px;">
<div class="ht">Ско<br>рость<br>по ж.с.<br>м/сек</div>
</div>
<div class="a th" style="left:380.0px;width:39.0px;">
<div class="ht">Ско<br>рость<br>по<br>Dэкв<br>м/сек</div>
</div>
<div class="a th" style="left:419.0px;width:44.0px;">
<div class="ht">Hd<br>динами<br>ческий<br>напор</div>
</div>
<div class="a th" style="left:463.0px;width:64.0px;">
<div class="ht">Устрой<br>ство<br>приема<br>раздачи</div>
</div>
<div class="a th" style="left:527.0px;width:38.0px;">
<div class="ht">КМС<br>Трой<br>ника</div>
</div>
<div class="a th" style="left:565.0px;width:50.0px;">
<div class="ht">КМС<br>отвод/<br>решётки</div>
</div>
<div class="a th" style="left:615.0px;width:54.0px;">
<div class="ht">KMCz<br>/ Общ</div>
</div>
<div class="a th" style="left:669.0px;width:39.0px;">
<div class="ht">Н<br>местн</div>
</div>
<div class="a th" style="left:708.0px;width:40.0px;">
<div class="ht">Потери<br>давл<br>по<br>длине<br>Па</div>
</div>
<div class="a th" style="left:748.0px;width:37.0px;">
<div class="ht">Н<br>полное<br>Па</div>
</div>
<div class="a th" style="left:785.0px;width:44.0px;">
<div class="ht">Дав<br>ление<br>начале<br>Па</div>
</div>
<div class="a th" style="left:829.0px;width:97.0px;">
<div class="ht">Дав<br>ление<br>конце<br>Па</div>
</div>
<div class="a th" style="left:926.0px;width:77.0px;">
<div class="ht">Гасимый<br>напор<br>Па<br>Невязка<br>%</div>
</div>
<div class="a th" style="left:1003.0px;width:31.0px;">
<div class="ht">Диа<br>фра<br>гма<br>Кмс</div>
</div>
<div class="a th" style="left:1034.0px;width:57.0px;">
<div class="ht">Диа<br>фрагма<br>сторона<br>А мм</div>
</div>
<div class="a th" style="left:1091.0px;width:51.0px;">
<div class="ht">Диа<br>фрагма<br>сторона<br>В мм</div>
</div>
<div class="a" style="left:0;top:69px;width:1143px;height:1px;background:#d3d9e2"></div>
<div class="a" style="left:0;top:70px;width:20px;height:21px;background:linear-gradient(#eef5fd,#d8e7f8)"></div>
<div class="a" style="left:20px;top:70px;width:1123px;height:21px;background:#fbae26"></div>
<div class="a td" style="left:-1.0px;top:70px;width:18.2px;text-align:right;font-weight:bold;">1</div>
<div class="a" style="left:19.0px;top:70px;width:12.0px;height:21px;background:#d9e8fb"></div>
<div class="a" style="left:20.0px;top:71px;width:10.0px;height:20px;border:1px solid #7c9cc8;border-radius:3px;background:#dbe9fa"></div>
<div class="a td" style="left:19.0px;top:70px;width:12.0px;text-align:center">1</div>
<div class="a" style="left:37px;top:76px;width:9px;height:9px;border:1px solid #222;background:transparent"></div>
<div class="a td" style="left:56.5px;top:70px;width:52.0px;text-align:left">Оцинков</div>
<div class="a td" style="left:105.0px;top:70px;width:47.2px;text-align:right;">1455</div>
<div class="a td" style="left:154.0px;top:70px;width:41.2px;text-align:right;">0</div>
<div class="a td" style="left:197.0px;top:70px;width:38.2px;text-align:right;">300</div>
<div class="a td" style="left:237.0px;top:70px;width:38.2px;text-align:right;">250</div>
<div class="a td" style="left:277.0px;top:70px;width:51.2px;text-align:right;">273</div>
<div class="a td" style="left:330.0px;top:70px;width:48.2px;text-align:right;">5,39</div>
<div class="a td" style="left:380.0px;top:70px;width:37.2px;text-align:right;">6,92</div>
<div class="a td" style="left:419.0px;top:70px;width:42.2px;text-align:right;">28</div>
<div class="a td" style="left:527.0px;top:70px;width:36.2px;text-align:right;">0</div>
<div class="a td" style="left:568.5px;top:70px;width:50.0px;text-align:left">0,31/0</div>
<div class="a td" style="left:618.5px;top:70px;width:54.0px;text-align:left">0/0,31</div>
<div class="a td" style="left:669.0px;top:70px;width:37.2px;text-align:right;">8,6</div>
<div class="a td" style="left:708.0px;top:70px;width:38.2px;text-align:right;">1</div>
<div class="a td" style="left:748.0px;top:70px;width:35.2px;text-align:right;">29,6</div>
<div class="a td" style="left:785.0px;top:70px;width:42.2px;text-align:right;">278,7</div>
<div class="a td" style="left:829.0px;top:70px;width:95.2px;text-align:right;">308,3</div>
<div class="a" style="left:0;top:91px;width:1143px;height:1px;background:#ece8e6"></div>
<div class="a" style="left:0;top:92px;width:20px;height:21px;background:linear-gradient(#fdfdfd 0%,#f1f1f1 45%,#e6e6e6 55%,#ececec 100%)"></div>
<div class="a" style="left:20px;top:92px;width:1123px;height:21px;background:#dbe9fa"></div>
<div class="a td" style="left:-1.0px;top:92px;width:18.2px;text-align:right;">2</div>
<div class="a td" style="left:19.0px;top:92px;width:12.0px;text-align:center">1</div>
<div class="a" style="left:37px;top:98px;width:9px;height:9px;border:1px solid #222;background:transparent"></div>
<div class="a td" style="left:56.5px;top:92px;width:52.0px;text-align:left">Оцинков</div>
<div class="a td" style="left:105.0px;top:92px;width:47.2px;text-align:right;">1455</div>
<div class="a td" style="left:154.0px;top:92px;width:41.2px;text-align:right;">0</div>
<div class="a td" style="left:197.0px;top:92px;width:38.2px;text-align:right;">300</div>
<div class="a td" style="left:237.0px;top:92px;width:38.2px;text-align:right;">250</div>
<div class="a td" style="left:277.0px;top:92px;width:51.2px;text-align:right;">273</div>
<div class="a td" style="left:330.0px;top:92px;width:48.2px;text-align:right;">5,39</div>
<div class="a td" style="left:380.0px;top:92px;width:37.2px;text-align:right;">6,92</div>
<div class="a td" style="left:419.0px;top:92px;width:42.2px;text-align:right;">28</div>
<div class="a td" style="left:527.0px;top:92px;width:36.2px;text-align:right;">0</div>
<div class="a td" style="left:568.5px;top:92px;width:50.0px;text-align:left">0/0</div>
<div class="a td" style="left:618.5px;top:92px;width:54.0px;text-align:left">0/0</div>
<div class="a td" style="left:669.0px;top:92px;width:37.2px;text-align:right;">0</div>
<div class="a td" style="left:708.0px;top:92px;width:38.2px;text-align:right;">1</div>
<div class="a td" style="left:748.0px;top:92px;width:35.2px;text-align:right;">1</div>
<div class="a td" style="left:785.0px;top:92px;width:42.2px;text-align:right;">308,3</div>
<div class="a td" style="left:829.0px;top:92px;width:95.2px;text-align:right;">309,3</div>
<div class="a" style="left:0;top:113px;width:1143px;height:1px;background:#ece8e6"></div>
<div class="a" style="left:0;top:114px;width:20px;height:21px;background:linear-gradient(#fdfdfd 0%,#f1f1f1 45%,#e6e6e6 55%,#ececec 100%)"></div>
<div class="a" style="left:20px;top:114px;width:1123px;height:21px;background:#dbe9fa"></div>
<div class="a td" style="left:-1.0px;top:114px;width:18.2px;text-align:right;">3</div>
<div class="a td" style="left:19.0px;top:114px;width:12.0px;text-align:center">1</div>
<div class="a" style="left:37px;top:120px;width:9px;height:9px;border:1px solid #222;background:transparent"></div>
<div class="a td" style="left:56.5px;top:114px;width:52.0px;text-align:left">Оцинков</div>
<div class="a td" style="left:105.0px;top:114px;width:47.2px;text-align:right;">1370</div>
<div class="a td" style="left:154.0px;top:114px;width:41.2px;text-align:right;">0</div>
<div class="a td" style="left:197.0px;top:114px;width:38.2px;text-align:right;">250</div>
<div class="a td" style="left:237.0px;top:114px;width:38.2px;text-align:right;">250</div>
<div class="a td" style="left:277.0px;top:114px;width:51.2px;text-align:right;">250</div>
<div class="a td" style="left:330.0px;top:114px;width:48.2px;text-align:right;">6,09</div>
<div class="a td" style="left:380.0px;top:114px;width:37.2px;text-align:right;">7,75</div>
<div class="a td" style="left:419.0px;top:114px;width:42.2px;text-align:right;">35,1</div>
<div class="a td" style="left:527.0px;top:114px;width:36.2px;text-align:right;">0</div>
<div class="a td" style="left:568.5px;top:114px;width:50.0px;text-align:left">0,25/0</div>
<div class="a td" style="left:618.5px;top:114px;width:54.0px;text-align:left">0,4/0,65</div>
<div class="a td" style="left:669.0px;top:114px;width:37.2px;text-align:right;">22,8</div>
<div class="a td" style="left:708.0px;top:114px;width:38.2px;text-align:right;">9</div>
<div class="a td" style="left:748.0px;top:114px;width:35.2px;text-align:right;">31,8</div>
<div class="a td" style="left:785.0px;top:114px;width:42.2px;text-align:right;">186,9</div>
<div class="a td" style="left:829.0px;top:114px;width:95.2px;text-align:right;">218,7</div>
<div class="a" style="left:0;top:135px;width:1143px;height:1px;background:#ece8e6"></div>
<div class="a" style="left:0;top:136px;width:20px;height:21px;background:linear-gradient(#fdfdfd 0%,#f1f1f1 45%,#e6e6e6 55%,#ececec 100%)"></div>
<div class="a" style="left:20px;top:136px;width:1123px;height:21px;background:#dbe9fa"></div>
<div class="a td" style="left:-1.0px;top:136px;width:18.2px;text-align:right;">4</div>
<div class="a td" style="left:19.0px;top:136px;width:12.0px;text-align:center">1</div>
<div class="a" style="left:37px;top:142px;width:9px;height:9px;border:1px solid #222;background:transparent"></div>
<div class="a td" style="left:56.5px;top:136px;width:52.0px;text-align:left">Оцинков</div>
<div class="a td" style="left:105.0px;top:136px;width:47.2px;text-align:right;">1370</div>
<div class="a td" style="left:154.0px;top:136px;width:41.2px;text-align:right;">0</div>
<div class="a td" style="left:197.0px;top:136px;width:38.2px;text-align:right;">250</div>
<div class="a td" style="left:237.0px;top:136px;width:38.2px;text-align:right;">250</div>
<div class="a td" style="left:277.0px;top:136px;width:51.2px;text-align:right;">250</div>
<div class="a td" style="left:330.0px;top:136px;width:48.2px;text-align:right;">6,09</div>
<div class="a td" style="left:380.0px;top:136px;width:37.2px;text-align:right;">7,75</div>
<div class="a td" style="left:419.0px;top:136px;width:42.2px;text-align:right;">35,1</div>
<div class="a td" style="left:527.0px;top:136px;width:36.2px;text-align:right;">0</div>
<div class="a td" style="left:568.5px;top:136px;width:50.0px;text-align:left">0,25/0</div>
<div class="a td" style="left:618.5px;top:136px;width:54.0px;text-align:left">0/0,25</div>
<div class="a td" style="left:669.0px;top:136px;width:37.2px;text-align:right;">8,8</div>
<div class="a td" style="left:708.0px;top:136px;width:38.2px;text-align:right;">9</div>
<div class="a td" style="left:748.0px;top:136px;width:35.2px;text-align:right;">17,8</div>
<div class="a td" style="left:785.0px;top:136px;width:42.2px;text-align:right;">218,7</div>
<div class="a td" style="left:829.0px;top:136px;width:95.2px;text-align:right;">236,5</div>
<div class="a" style="left:0;top:157px;width:1143px;height:1px;background:#ece8e6"></div>
<div class="a" style="left:0;top:158px;width:20px;height:21px;background:linear-gradient(#fdfdfd 0%,#f1f1f1 45%,#e6e6e6 55%,#ececec 100%)"></div>
<div class="a" style="left:20px;top:158px;width:1123px;height:21px;background:#dbe9fa"></div>
<div class="a td" style="left:-1.0px;top:158px;width:18.2px;text-align:right;">5</div>
<div class="a td" style="left:19.0px;top:158px;width:12.0px;text-align:center">1</div>
<div class="a" style="left:37px;top:164px;width:9px;height:9px;border:1px solid #222;background:transparent"></div>
<div class="a td" style="left:56.5px;top:158px;width:52.0px;text-align:left">Оцинков</div>
<div class="a td" style="left:105.0px;top:158px;width:47.2px;text-align:right;">1370</div>
<div class="a td" style="left:154.0px;top:158px;width:41.2px;text-align:right;">0</div>
<div class="a td" style="left:197.0px;top:158px;width:38.2px;text-align:right;">250</div>
<div class="a td" style="left:237.0px;top:158px;width:38.2px;text-align:right;">250</div>
<div class="a td" style="left:277.0px;top:158px;width:51.2px;text-align:right;">250</div>
<div class="a td" style="left:330.0px;top:158px;width:48.2px;text-align:right;">6,09</div>
<div class="a td" style="left:380.0px;top:158px;width:37.2px;text-align:right;">7,75</div>
<div class="a td" style="left:419.0px;top:158px;width:42.2px;text-align:right;">35,1</div>
<div class="a td" style="left:527.0px;top:158px;width:36.2px;text-align:right;">0,95</div>
<div class="a td" style="left:568.5px;top:158px;width:50.0px;text-align:left">0/0</div>
<div class="a td" style="left:618.5px;top:158px;width:54.0px;text-align:left">0/0,95</div>
<div class="a td" style="left:669.0px;top:158px;width:37.2px;text-align:right;">33,2</div>
<div class="a td" style="left:708.0px;top:158px;width:38.2px;text-align:right;">9</div>
<div class="a td" style="left:748.0px;top:158px;width:35.2px;text-align:right;">42,2</div>
<div class="a td" style="left:785.0px;top:158px;width:42.2px;text-align:right;">236,5</div>
<div class="a td" style="left:829.0px;top:158px;width:95.2px;text-align:right;">278,7</div>
<div class="a" style="left:0;top:179px;width:1143px;height:1px;background:#ece8e6"></div>
<div class="a" style="left:0;top:180px;width:20px;height:21px;background:linear-gradient(#fdfdfd 0%,#f1f1f1 45%,#e6e6e6 55%,#ececec 100%)"></div>
<div class="a" style="left:20px;top:180px;width:1123px;height:21px;background:#dbe9fa"></div>
<div class="a td" style="left:-1.0px;top:180px;width:18.2px;text-align:right;">6</div>
<div class="a td" style="left:19.0px;top:180px;width:12.0px;text-align:center">1</div>
<div class="a" style="left:37px;top:186px;width:9px;height:9px;border:1px solid #222;background:transparent"></div>
<div class="a td" style="left:56.5px;top:180px;width:52.0px;text-align:left">Оцинков</div>
<div class="a td" style="left:105.0px;top:180px;width:47.2px;text-align:right;">790</div>
<div class="a td" style="left:154.0px;top:180px;width:41.2px;text-align:right;">0</div>
<div class="a td" style="left:197.0px;top:180px;width:38.2px;text-align:right;">250</div>
<div class="a td" style="left:237.0px;top:180px;width:38.2px;text-align:right;">150</div>
<div class="a td" style="left:277.0px;top:180px;width:51.2px;text-align:right;">188</div>
<div class="a td" style="left:330.0px;top:180px;width:48.2px;text-align:right;">5,85</div>
<div class="a td" style="left:380.0px;top:180px;width:37.2px;text-align:right;">7,95</div>
<div class="a td" style="left:419.0px;top:180px;width:42.2px;text-align:right;">36,9</div>
<div class="a td" style="left:527.0px;top:180px;width:36.2px;text-align:right;">1,1</div>
<div class="a td" style="left:568.5px;top:180px;width:50.0px;text-align:left">0/0</div>
<div class="a td" style="left:618.5px;top:180px;width:54.0px;text-align:left">0/1,1</div>
<div class="a td" style="left:669.0px;top:180px;width:37.2px;text-align:right;">40,7</div>
<div class="a td" style="left:708.0px;top:180px;width:38.2px;text-align:right;">24,3</div>
<div class="a td" style="left:748.0px;top:180px;width:35.2px;text-align:right;">65</div>
<div class="a td" style="left:785.0px;top:180px;width:42.2px;text-align:right;">121,9</div>
<div class="a td" style="left:829.0px;top:180px;width:95.2px;text-align:right;">186,9</div>
<div class="a" style="left:0;top:201px;width:1143px;height:1px;background:#ece8e6"></div>
<div class="a" style="left:0;top:202px;width:20px;height:21px;background:linear-gradient(#fdfdfd 0%,#f1f1f1 45%,#e6e6e6 55%,#ececec 100%)"></div>
<div class="a" style="left:20px;top:202px;width:1123px;height:21px;background:#dbe9fa"></div>
<div class="a td" style="left:-1.0px;top:202px;width:18.2px;text-align:right;">7</div>
<div class="a td" style="left:19.0px;top:202px;width:12.0px;text-align:center">1</div>
<div class="a" style="left:37px;top:208px;width:9px;height:9px;border:1px solid #222;background:transparent"></div>
<div class="a td" style="left:56.5px;top:202px;width:52.0px;text-align:left">Оцинков</div>
<div class="a td" style="left:105.0px;top:202px;width:47.2px;text-align:right;">580</div>
<div class="a td" style="left:154.0px;top:202px;width:41.2px;text-align:right;">0</div>
<div class="a td" style="left:197.0px;top:202px;width:38.2px;text-align:right;">200</div>
<div class="a td" style="left:237.0px;top:202px;width:38.2px;text-align:right;">150</div>
<div class="a td" style="left:277.0px;top:202px;width:51.2px;text-align:right;">171</div>
<div class="a td" style="left:330.0px;top:202px;width:48.2px;text-align:right;">5,37</div>
<div class="a td" style="left:380.0px;top:202px;width:37.2px;text-align:right;">6,98</div>
<div class="a td" style="left:419.0px;top:202px;width:42.2px;text-align:right;">28,5</div>
<div class="a td" style="left:527.0px;top:202px;width:36.2px;text-align:right;">0,43</div>
<div class="a td" style="left:568.5px;top:202px;width:50.0px;text-align:left">0/0</div>
<div class="a td" style="left:618.5px;top:202px;width:54.0px;text-align:left">0,9/1,33</div>
<div class="a td" style="left:669.0px;top:202px;width:37.2px;text-align:right;">38</div>
<div class="a td" style="left:708.0px;top:202px;width:38.2px;text-align:right;">10,7</div>
<div class="a td" style="left:748.0px;top:202px;width:35.2px;text-align:right;">48,7</div>
<div class="a td" style="left:785.0px;top:202px;width:42.2px;text-align:right;">41</div>
<div class="a td" style="left:829.0px;top:202px;width:95.2px;text-align:right;">89,7</div>
<div class="a" style="left:0;top:223px;width:1143px;height:1px;background:#ece8e6"></div>
<div class="a" style="left:0;top:224px;width:20px;height:21px;background:linear-gradient(#fdfdfd 0%,#f1f1f1 45%,#e6e6e6 55%,#ececec 100%)"></div>
<div class="a" style="left:20px;top:224px;width:1123px;height:21px;background:#dbe9fa"></div>
<div class="a td" style="left:-1.0px;top:224px;width:18.2px;text-align:right;">8</div>
<div class="a td" style="left:19.0px;top:224px;width:12.0px;text-align:center">1</div>
<div class="a" style="left:37px;top:230px;width:9px;height:9px;border:1px solid #222;background:transparent"></div>
<div class="a td" style="left:56.5px;top:224px;width:52.0px;text-align:left">Оцинков</div>
<div class="a td" style="left:105.0px;top:224px;width:47.2px;text-align:right;">580</div>
<div class="a td" style="left:154.0px;top:224px;width:41.2px;text-align:right;">0</div>
<div class="a td" style="left:197.0px;top:224px;width:38.2px;text-align:right;">200</div>
<div class="a td" style="left:237.0px;top:224px;width:38.2px;text-align:right;">150</div>
<div class="a td" style="left:277.0px;top:224px;width:51.2px;text-align:right;">171</div>
<div class="a td" style="left:330.0px;top:224px;width:48.2px;text-align:right;">5,37</div>
<div class="a td" style="left:380.0px;top:224px;width:37.2px;text-align:right;">6,98</div>
<div class="a td" style="left:419.0px;top:224px;width:42.2px;text-align:right;">28,5</div>
<div class="a td" style="left:527.0px;top:224px;width:36.2px;text-align:right;">0</div>
<div class="a td" style="left:568.5px;top:224px;width:50.0px;text-align:left">0,22/0</div>
<div class="a td" style="left:618.5px;top:224px;width:54.0px;text-align:left">0,9/1,12</div>
<div class="a td" style="left:669.0px;top:224px;width:37.2px;text-align:right;">31,8</div>
<div class="a td" style="left:708.0px;top:224px;width:38.2px;text-align:right;">12,5</div>
<div class="a td" style="left:748.0px;top:224px;width:35.2px;text-align:right;">44,2</div>
<div class="a td" style="left:785.0px;top:224px;width:42.2px;text-align:right;">41,7</div>
<div class="a td" style="left:829.0px;top:224px;width:95.2px;text-align:right;">85,9</div>
<div class="a" style="left:0;top:245px;width:1143px;height:1px;background:#ece8e6"></div>
<div class="a" style="left:0;top:246px;width:20px;height:21px;background:linear-gradient(#fdfdfd 0%,#f1f1f1 45%,#e6e6e6 55%,#ececec 100%)"></div>
<div class="a" style="left:20px;top:246px;width:1123px;height:21px;background:#dbe9fa"></div>
<div class="a td" style="left:-1.0px;top:246px;width:18.2px;text-align:right;">9</div>
<div class="a td" style="left:19.0px;top:246px;width:12.0px;text-align:center">1</div>
<div class="a" style="left:37px;top:252px;width:9px;height:9px;border:1px solid #222;background:transparent"></div>
<div class="a td" style="left:56.5px;top:246px;width:52.0px;text-align:left">Оцинков</div>
<div class="a td" style="left:105.0px;top:246px;width:47.2px;text-align:right;">580</div>
<div class="a td" style="left:154.0px;top:246px;width:41.2px;text-align:right;">0</div>
<div class="a td" style="left:197.0px;top:246px;width:38.2px;text-align:right;">200</div>
<div class="a td" style="left:237.0px;top:246px;width:38.2px;text-align:right;">150</div>
<div class="a td" style="left:277.0px;top:246px;width:51.2px;text-align:right;">171</div>
<div class="a td" style="left:330.0px;top:246px;width:48.2px;text-align:right;">5,37</div>
<div class="a td" style="left:380.0px;top:246px;width:37.2px;text-align:right;">6,98</div>
<div class="a td" style="left:419.0px;top:246px;width:42.2px;text-align:right;">28,5</div>
<div class="a td" style="left:527.0px;top:246px;width:36.2px;text-align:right;">0,83</div>
<div class="a td" style="left:568.5px;top:246px;width:50.0px;text-align:left">0/0</div>
<div class="a td" style="left:618.5px;top:246px;width:54.0px;text-align:left">0/0,83</div>
<div class="a td" style="left:669.0px;top:246px;width:37.2px;text-align:right;">23,6</div>
<div class="a td" style="left:708.0px;top:246px;width:38.2px;text-align:right;">12,5</div>
<div class="a td" style="left:748.0px;top:246px;width:35.2px;text-align:right;">36</div>
<div class="a td" style="left:785.0px;top:246px;width:42.2px;text-align:right;">85,9</div>
<div class="a td" style="left:829.0px;top:246px;width:95.2px;text-align:right;">121,9</div>
<div class="a" style="left:0;top:267px;width:1143px;height:1px;background:#ece8e6"></div>
<div class="a" style="left:0;top:268px;width:20px;height:21px;background:linear-gradient(#fdfdfd 0%,#f1f1f1 45%,#e6e6e6 55%,#ececec 100%)"></div>
<div class="a" style="left:20px;top:268px;width:1123px;height:21px;background:#dbe9fa"></div>
<div class="a td" style="left:-1.0px;top:268px;width:18.2px;text-align:right;">10</div>
<div class="a td" style="left:19.0px;top:268px;width:12.0px;text-align:center">6</div>
<div class="a" style="left:37px;top:274px;width:9px;height:9px;border:1px solid #222;background:transparent"></div>
<div class="a td" style="left:56.5px;top:268px;width:52.0px;text-align:left">Оцинков</div>
<div class="a td" style="left:105.0px;top:268px;width:47.2px;text-align:right;">85</div>
<div class="a td" style="left:154.0px;top:268px;width:41.2px;text-align:right;">0</div>
<div class="a td" style="left:197.0px;top:268px;width:38.2px;text-align:right;">150</div>
<div class="a td" style="left:237.0px;top:268px;width:38.2px;text-align:right;">100</div>
<div class="a td" style="left:277.0px;top:268px;width:51.2px;text-align:right;">120</div>
<div class="a td" style="left:330.0px;top:268px;width:48.2px;text-align:right;">1,57</div>
<div class="a td" style="left:380.0px;top:268px;width:37.2px;text-align:right;">2,09</div>
<div class="a td" style="left:419.0px;top:268px;width:42.2px;text-align:right;">2,5</div>
<div class="a td" style="left:466.5px;top:268px;width:64.0px;text-align:left">4РВПР-170</div>
<div class="a td" style="left:527.0px;top:268px;width:36.2px;text-align:right;">0</div>
<div class="a td" style="left:568.5px;top:268px;width:50.0px;text-align:left">0,16/0</div>
<div class="a td" style="left:618.5px;top:268px;width:54.0px;text-align:left">0/0,16</div>
<div class="a td" style="left:669.0px;top:268px;width:37.2px;text-align:right;">0,4</div>
<div class="a td" style="left:708.0px;top:268px;width:38.2px;text-align:right;">0,5</div>
<div class="a td" style="left:748.0px;top:268px;width:35.2px;text-align:right;">5,9</div>
<div class="a td" style="left:785.0px;top:268px;width:42.2px;text-align:right;">2,5</div>
<div class="a td" style="left:829.0px;top:268px;width:95.2px;text-align:right;">8,5</div>
<div class="a" style="left:0;top:289px;width:1143px;height:1px;background:#ece8e6"></div>
<div class="a" style="left:0;top:290px;width:20px;height:21px;background:linear-gradient(#fdfdfd 0%,#f1f1f1 45%,#e6e6e6 55%,#ececec 100%)"></div>
<div class="a" style="left:20px;top:290px;width:1123px;height:21px;background:#dbe9fa"></div>
<div class="a td" style="left:-1.0px;top:290px;width:18.2px;text-align:right;">11</div>
<div class="a td" style="left:19.0px;top:290px;width:12.0px;text-align:center">6</div>
<div class="a" style="left:37px;top:296px;width:9px;height:9px;border:1px solid #222;background:transparent"></div>
<div class="a td" style="left:56.5px;top:290px;width:52.0px;text-align:left">Оцинков</div>
<div class="a td" style="left:105.0px;top:290px;width:47.2px;text-align:right;">85</div>
<div class="a td" style="left:154.0px;top:290px;width:41.2px;text-align:right;">0</div>
<div class="a td" style="left:197.0px;top:290px;width:38.2px;text-align:right;">150</div>
<div class="a td" style="left:237.0px;top:290px;width:38.2px;text-align:right;">100</div>
<div class="a td" style="left:277.0px;top:290px;width:51.2px;text-align:right;">120</div>
<div class="a td" style="left:330.0px;top:290px;width:48.2px;text-align:right;">1,57</div>
<div class="a td" style="left:380.0px;top:290px;width:37.2px;text-align:right;">2,09</div>
<div class="a td" style="left:419.0px;top:290px;width:42.2px;text-align:right;">2,5</div>
<div class="a td" style="left:527.0px;top:290px;width:36.2px;text-align:right;">87,65</div>
<div class="a td" style="left:568.5px;top:290px;width:50.0px;text-align:left">0/0</div>
<div class="a td" style="left:618.5px;top:290px;width:54.0px;text-align:left">0/87,65</div>
<div class="a td" style="left:669.0px;top:290px;width:37.2px;text-align:right;">223,4</div>
<div class="a td" style="left:708.0px;top:290px;width:38.2px;text-align:right;">0,6</div>
<div class="a td" style="left:748.0px;top:290px;width:35.2px;text-align:right;">229</div>
<div class="a td" style="left:785.0px;top:290px;width:42.2px;text-align:right;">8,5</div>
<div class="a td" style="left:829.0px;top:290px;width:95.2px;text-align:right;">237,4</div>
<div class="a td" style="left:929.5px;top:290px;width:77.0px;text-align:left">41,3<svg width="12" height="8" style="vertical-align:0px;margin-left:0.5px"><path d="M0 4 L10.5 4 M7.5 1 L11 4 L7.5 7" stroke="#111" stroke-width="1.1" fill="none"/></svg> 15%</div>
<div class="a td" style="left:1003.0px;top:290px;width:29.2px;text-align:right;">16,1</div>
<div class="a td" style="left:1034.0px;top:290px;width:55.2px;text-align:right;">112</div>
<div class="a td" style="left:1091.0px;top:290px;width:49.2px;text-align:right;">75</div>
<div class="a" style="left:0;top:311px;width:1143px;height:1px;background:#ece8e6"></div>
<div class="a" style="left:0;top:312px;width:20px;height:21px;background:linear-gradient(#fdfdfd 0%,#f1f1f1 45%,#e6e6e6 55%,#ececec 100%)"></div>
<div class="a" style="left:20px;top:312px;width:1123px;height:21px;background:#dbe9fa"></div>
<div class="a td" style="left:-1.0px;top:312px;width:18.2px;text-align:right;">12</div>
<div class="a td" style="left:19.0px;top:312px;width:12.0px;text-align:center">5</div>
<div class="a" style="left:37px;top:318px;width:9px;height:9px;border:1px solid #222;background:transparent"></div>
<div class="a td" style="left:56.5px;top:312px;width:52.0px;text-align:left">Оцинков</div>
<div class="a td" style="left:105.0px;top:312px;width:47.2px;text-align:right;">290</div>
<div class="a td" style="left:154.0px;top:312px;width:41.2px;text-align:right;">0</div>
<div class="a td" style="left:197.0px;top:312px;width:38.2px;text-align:right;">150</div>
<div class="a td" style="left:237.0px;top:312px;width:38.2px;text-align:right;">150</div>
<div class="a td" style="left:277.0px;top:312px;width:51.2px;text-align:right;">150</div>
<div class="a td" style="left:330.0px;top:312px;width:48.2px;text-align:right;">3,58</div>
<div class="a td" style="left:380.0px;top:312px;width:37.2px;text-align:right;">4,56</div>
<div class="a td" style="left:419.0px;top:312px;width:42.2px;text-align:right;">12,2</div>
<div class="a td" style="left:466.5px;top:312px;width:64.0px;text-align:left">4РВПР-170</div>
<div class="a td" style="left:527.0px;top:312px;width:36.2px;text-align:right;">1,97</div>
<div class="a td" style="left:568.5px;top:312px;width:50.0px;text-align:left">0/0</div>
<div class="a td" style="left:618.5px;top:312px;width:54.0px;text-align:left">0/1,97</div>
<div class="a td" style="left:669.0px;top:312px;width:37.2px;text-align:right;">23,9</div>
<div class="a td" style="left:708.0px;top:312px;width:38.2px;text-align:right;">1</div>
<div class="a td" style="left:748.0px;top:312px;width:35.2px;text-align:right;">28,9</div>
<div class="a td" style="left:785.0px;top:312px;width:42.2px;text-align:right;">12,2</div>
<div class="a td" style="left:829.0px;top:312px;width:95.2px;text-align:right;">41</div>
<div class="a" style="left:0;top:333px;width:1143px;height:1px;background:#ece8e6"></div>
<div class="a" style="left:0;top:334px;width:20px;height:21px;background:linear-gradient(#fdfdfd 0%,#f1f1f1 45%,#e6e6e6 55%,#ececec 100%)"></div>
<div class="a" style="left:20px;top:334px;width:1123px;height:21px;background:#dbe9fa"></div>
<div class="a td" style="left:-1.0px;top:334px;width:18.2px;text-align:right;">13</div>
<div class="a td" style="left:19.0px;top:334px;width:12.0px;text-align:center">4</div>
<div class="a" style="left:37px;top:340px;width:9px;height:9px;border:1px solid #222;background:transparent"></div>
<div class="a td" style="left:56.5px;top:334px;width:52.0px;text-align:left">Оцинков</div>
<div class="a td" style="left:105.0px;top:334px;width:47.2px;text-align:right;">290</div>
<div class="a td" style="left:154.0px;top:334px;width:41.2px;text-align:right;">0</div>
<div class="a td" style="left:197.0px;top:334px;width:38.2px;text-align:right;">150</div>
<div class="a td" style="left:237.0px;top:334px;width:38.2px;text-align:right;">150</div>
<div class="a td" style="left:277.0px;top:334px;width:51.2px;text-align:right;">150</div>
<div class="a td" style="left:330.0px;top:334px;width:48.2px;text-align:right;">3,58</div>
<div class="a td" style="left:380.0px;top:334px;width:37.2px;text-align:right;">4,56</div>
<div class="a td" style="left:419.0px;top:334px;width:42.2px;text-align:right;">12,2</div>
<div class="a td" style="left:466.5px;top:334px;width:64.0px;text-align:left">4РВПР-170</div>
<div class="a td" style="left:527.0px;top:334px;width:36.2px;text-align:right;">0</div>
<div class="a td" style="left:568.5px;top:334px;width:50.0px;text-align:left">0/0</div>
<div class="a td" style="left:618.5px;top:334px;width:54.0px;text-align:left">0/0</div>
<div class="a td" style="left:669.0px;top:334px;width:37.2px;text-align:right;">0</div>
<div class="a td" style="left:708.0px;top:334px;width:38.2px;text-align:right;">1</div>
<div class="a td" style="left:748.0px;top:334px;width:35.2px;text-align:right;">5</div>
<div class="a td" style="left:785.0px;top:334px;width:42.2px;text-align:right;">12,2</div>
<div class="a td" style="left:829.0px;top:334px;width:95.2px;text-align:right;">17,2</div>
<div class="a" style="left:0;top:355px;width:1143px;height:1px;background:#ece8e6"></div>
<div class="a" style="left:0;top:356px;width:20px;height:21px;background:linear-gradient(#fdfdfd 0%,#f1f1f1 45%,#e6e6e6 55%,#ececec 100%)"></div>
<div class="a" style="left:20px;top:356px;width:1123px;height:21px;background:#dbe9fa"></div>
<div class="a td" style="left:-1.0px;top:356px;width:18.2px;text-align:right;">14</div>
<div class="a td" style="left:19.0px;top:356px;width:12.0px;text-align:center">4</div>
<div class="a" style="left:37px;top:362px;width:9px;height:9px;border:1px solid #222;background:transparent"></div>
<div class="a td" style="left:56.5px;top:356px;width:52.0px;text-align:left">Оцинков</div>
<div class="a td" style="left:105.0px;top:356px;width:47.2px;text-align:right;">290</div>
<div class="a td" style="left:154.0px;top:356px;width:41.2px;text-align:right;">0</div>
<div class="a td" style="left:197.0px;top:356px;width:38.2px;text-align:right;">200</div>
<div class="a td" style="left:237.0px;top:356px;width:38.2px;text-align:right;">150</div>
<div class="a td" style="left:277.0px;top:356px;width:51.2px;text-align:right;">171</div>
<div class="a td" style="left:330.0px;top:356px;width:48.2px;text-align:right;">2,69</div>
<div class="a td" style="left:380.0px;top:356px;width:37.2px;text-align:right;">3,49</div>
<div class="a td" style="left:419.0px;top:356px;width:42.2px;text-align:right;">7,1</div>
<div class="a td" style="left:527.0px;top:356px;width:36.2px;text-align:right;">-1,05</div>
<div class="a td" style="left:568.5px;top:356px;width:50.0px;text-align:left">0/0</div>
<div class="a td" style="left:618.5px;top:356px;width:54.0px;text-align:left">0/-0,7</div>
<div class="a td" style="left:669.0px;top:356px;width:37.2px;text-align:right;">-5</div>
<div class="a td" style="left:708.0px;top:356px;width:38.2px;text-align:right;">1</div>
<div class="a td" style="left:748.0px;top:356px;width:35.2px;text-align:right;">0,0</div>
<div class="a td" style="left:785.0px;top:356px;width:42.2px;text-align:right;">17,2</div>
<div class="a td" style="left:829.0px;top:356px;width:95.2px;text-align:right;">17,2</div>
<div class="a td" style="left:929.5px;top:356px;width:77.0px;text-align:left">121<svg width="12" height="8" style="vertical-align:0px;margin-left:0.5px"><path d="M0 4 L10.5 4 M7.5 1 L11 4 L7.5 7" stroke="#111" stroke-width="1.1" fill="none"/></svg> 58%</div>
<div class="a td" style="left:1003.0px;top:356px;width:29.2px;text-align:right;">3,35</div>
<div class="a td" style="left:1034.0px;top:356px;width:55.2px;text-align:right;">170</div>
<div class="a td" style="left:1091.0px;top:356px;width:49.2px;text-align:right;">128</div>
<div class="a" style="left:0;top:377px;width:1143px;height:1px;background:#ece8e6"></div>
<div class="a" style="left:0;top:378px;width:20px;height:21px;background:linear-gradient(#fdfdfd 0%,#f1f1f1 45%,#e6e6e6 55%,#ececec 100%)"></div>
<div class="a" style="left:20px;top:378px;width:1123px;height:21px;background:#dbe9fa"></div>
<div class="a td" style="left:-1.0px;top:378px;width:18.2px;text-align:right;">15</div>
<div class="a td" style="left:19.0px;top:378px;width:12.0px;text-align:center">3</div>
<div class="a" style="left:37px;top:384px;width:9px;height:9px;border:1px solid #222;background:transparent"></div>
<div class="a td" style="left:56.5px;top:378px;width:52.0px;text-align:left">Оцинков</div>
<div class="a td" style="left:105.0px;top:378px;width:47.2px;text-align:right;">210</div>
<div class="a td" style="left:154.0px;top:378px;width:41.2px;text-align:right;">0</div>
<div class="a td" style="left:197.0px;top:378px;width:38.2px;text-align:right;">150</div>
<div class="a td" style="left:237.0px;top:378px;width:38.2px;text-align:right;">100</div>
<div class="a td" style="left:277.0px;top:378px;width:51.2px;text-align:right;">120</div>
<div class="a td" style="left:330.0px;top:378px;width:48.2px;text-align:right;">3,89</div>
<div class="a td" style="left:380.0px;top:378px;width:37.2px;text-align:right;">5,16</div>
<div class="a td" style="left:419.0px;top:378px;width:42.2px;text-align:right;">15,6</div>
<div class="a td" style="left:466.5px;top:378px;width:64.0px;text-align:left">4РВПР-170</div>
<div class="a td" style="left:527.0px;top:378px;width:36.2px;text-align:right;">0</div>
<div class="a td" style="left:568.5px;top:378px;width:50.0px;text-align:left">0,01/0</div>
<div class="a td" style="left:618.5px;top:378px;width:54.0px;text-align:left">0/0,01</div>
<div class="a td" style="left:669.0px;top:378px;width:37.2px;text-align:right;">0,1</div>
<div class="a td" style="left:708.0px;top:378px;width:38.2px;text-align:right;">1,6</div>
<div class="a td" style="left:748.0px;top:378px;width:35.2px;text-align:right;">6,7</div>
<div class="a td" style="left:785.0px;top:378px;width:42.2px;text-align:right;">15,6</div>
<div class="a td" style="left:829.0px;top:378px;width:95.2px;text-align:right;">22,3</div>
<div class="a" style="left:0;top:399px;width:1143px;height:1px;background:#ece8e6"></div>
<div class="a" style="left:0;top:400px;width:20px;height:21px;background:linear-gradient(#fdfdfd 0%,#f1f1f1 45%,#e6e6e6 55%,#ececec 100%)"></div>
<div class="a" style="left:20px;top:400px;width:1123px;height:21px;background:#dbe9fa"></div>
<div class="a td" style="left:-1.0px;top:400px;width:18.2px;text-align:right;">16</div>
<div class="a td" style="left:19.0px;top:400px;width:12.0px;text-align:center">3</div>
<div class="a" style="left:37px;top:406px;width:9px;height:9px;border:1px solid #222;background:transparent"></div>
<div class="a td" style="left:56.5px;top:400px;width:52.0px;text-align:left">Оцинков</div>
<div class="a td" style="left:105.0px;top:400px;width:47.2px;text-align:right;">210</div>
<div class="a td" style="left:154.0px;top:400px;width:41.2px;text-align:right;">0</div>
<div class="a td" style="left:197.0px;top:400px;width:38.2px;text-align:right;">150</div>
<div class="a td" style="left:237.0px;top:400px;width:38.2px;text-align:right;">100</div>
<div class="a td" style="left:277.0px;top:400px;width:51.2px;text-align:right;">120</div>
<div class="a td" style="left:330.0px;top:400px;width:48.2px;text-align:right;">3,89</div>
<div class="a td" style="left:380.0px;top:400px;width:37.2px;text-align:right;">5,16</div>
<div class="a td" style="left:419.0px;top:400px;width:42.2px;text-align:right;">15,6</div>
<div class="a td" style="left:527.0px;top:400px;width:36.2px;text-align:right;">3,17</div>
<div class="a td" style="left:568.5px;top:400px;width:50.0px;text-align:left">0/0</div>
<div class="a td" style="left:618.5px;top:400px;width:54.0px;text-align:left">1,2/4,37</div>
<div class="a td" style="left:669.0px;top:400px;width:37.2px;text-align:right;">68,1</div>
<div class="a td" style="left:708.0px;top:400px;width:38.2px;text-align:right;">15,9</div>
<div class="a td" style="left:748.0px;top:400px;width:35.2px;text-align:right;">84</div>
<div class="a td" style="left:785.0px;top:400px;width:42.2px;text-align:right;">22,3</div>
<div class="a td" style="left:829.0px;top:400px;width:95.2px;text-align:right;">106,2</div>
<div class="a td" style="left:929.5px;top:400px;width:77.0px;text-align:left">15,7<svg width="12" height="8" style="vertical-align:0px;margin-left:0.5px"><path d="M0 4 L10.5 4 M7.5 1 L11 4 L7.5 7" stroke="#111" stroke-width="1.1" fill="none"/></svg> 13%</div>
<div class="a td" style="left:1003.0px;top:400px;width:29.2px;text-align:right;">1,01</div>
<div class="a td" style="left:1034.0px;top:400px;width:55.2px;text-align:right;">137</div>
<div class="a td" style="left:1091.0px;top:400px;width:49.2px;text-align:right;">91</div>
<div class="a" style="left:0;top:421px;width:1143px;height:1px;background:#ece8e6"></div>
<div class="a" style="left:0;top:422px;width:20px;height:21px;background:linear-gradient(#fdfdfd,#f1f1f1)"></div>
<div class="a" style="left:19.0px;top:70px;width:1px;height:360px;background:#c9cdd3"></div>
<div class="a" style="left:31.0px;top:70px;width:1px;height:360px;background:#ece8e6"></div>
<div class="a" style="left:53.0px;top:70px;width:1px;height:360px;background:#ece8e6"></div>
<div class="a" style="left:105.0px;top:70px;width:1px;height:360px;background:#ece8e6"></div>
<div class="a" style="left:154.0px;top:70px;width:1px;height:360px;background:#ece8e6"></div>
<div class="a" style="left:197.0px;top:70px;width:1px;height:360px;background:#ece8e6"></div>
<div class="a" style="left:237.0px;top:70px;width:1px;height:360px;background:#ece8e6"></div>
<div class="a" style="left:277.0px;top:70px;width:1px;height:360px;background:#ece8e6"></div>
<div class="a" style="left:330.0px;top:70px;width:1px;height:360px;background:#ece8e6"></div>
<div class="a" style="left:380.0px;top:70px;width:1px;height:360px;background:#ece8e6"></div>
<div class="a" style="left:419.0px;top:70px;width:1px;height:360px;background:#ece8e6"></div>
<div class="a" style="left:463.0px;top:70px;width:1px;height:360px;background:#ece8e6"></div>
<div class="a" style="left:527.0px;top:70px;width:1px;height:360px;background:#ece8e6"></div>
<div class="a" style="left:565.0px;top:70px;width:1px;height:360px;background:#ece8e6"></div>
<div class="a" style="left:615.0px;top:70px;width:1px;height:360px;background:#ece8e6"></div>
<div class="a" style="left:669.0px;top:70px;width:1px;height:360px;background:#ece8e6"></div>
<div class="a" style="left:708.0px;top:70px;width:1px;height:360px;background:#ece8e6"></div>
<div class="a" style="left:748.0px;top:70px;width:1px;height:360px;background:#ece8e6"></div>
<div class="a" style="left:785.0px;top:70px;width:1px;height:360px;background:#ece8e6"></div>
<div class="a" style="left:829.0px;top:70px;width:1px;height:360px;background:#ece8e6"></div>
<div class="a" style="left:926.0px;top:70px;width:1px;height:360px;background:#ece8e6"></div>
<div class="a" style="left:1003.0px;top:70px;width:1px;height:360px;background:#ece8e6"></div>
<div class="a" style="left:1034.0px;top:70px;width:1px;height:360px;background:#ece8e6"></div>
<div class="a" style="left:1091.0px;top:70px;width:1px;height:360px;background:#ece8e6"></div>
<div class="a" style="left:1142.0px;top:70px;width:1px;height:360px;background:#ece8e6"></div>
<div class="a" style="left:19.0px;top:1px;width:1px;height:68px;background:#d3d8df"></div>
<div class="a" style="left:31.0px;top:1px;width:1px;height:68px;background:#d3d8df"></div>
<div class="a" style="left:53.0px;top:1px;width:1px;height:68px;background:#d3d8df"></div>
<div class="a" style="left:105.0px;top:1px;width:1px;height:68px;background:#d3d8df"></div>
<div class="a" style="left:154.0px;top:1px;width:1px;height:68px;background:#d3d8df"></div>
<div class="a" style="left:197.0px;top:1px;width:1px;height:68px;background:#d3d8df"></div>
<div class="a" style="left:237.0px;top:1px;width:1px;height:68px;background:#d3d8df"></div>
<div class="a" style="left:277.0px;top:1px;width:1px;height:68px;background:#d3d8df"></div>
<div class="a" style="left:330.0px;top:1px;width:1px;height:68px;background:#d3d8df"></div>
<div class="a" style="left:380.0px;top:1px;width:1px;height:68px;background:#d3d8df"></div>
<div class="a" style="left:419.0px;top:1px;width:1px;height:68px;background:#d3d8df"></div>
<div class="a" style="left:463.0px;top:1px;width:1px;height:68px;background:#d3d8df"></div>
<div class="a" style="left:527.0px;top:1px;width:1px;height:68px;background:#d3d8df"></div>
<div class="a" style="left:565.0px;top:1px;width:1px;height:68px;background:#d3d8df"></div>
<div class="a" style="left:615.0px;top:1px;width:1px;height:68px;background:#d3d8df"></div>
<div class="a" style="left:669.0px;top:1px;width:1px;height:68px;background:#d3d8df"></div>
<div class="a" style="left:708.0px;top:1px;width:1px;height:68px;background:#d3d8df"></div>
<div class="a" style="left:748.0px;top:1px;width:1px;height:68px;background:#d3d8df"></div>
<div class="a" style="left:785.0px;top:1px;width:1px;height:68px;background:#d3d8df"></div>
<div class="a" style="left:829.0px;top:1px;width:1px;height:68px;background:#d3d8df"></div>
<div class="a" style="left:926.0px;top:1px;width:1px;height:68px;background:#d3d8df"></div>
<div class="a" style="left:1003.0px;top:1px;width:1px;height:68px;background:#d3d8df"></div>
<div class="a" style="left:1034.0px;top:1px;width:1px;height:68px;background:#d3d8df"></div>
<div class="a" style="left:1091.0px;top:1px;width:1px;height:68px;background:#d3d8df"></div>
<div class="a" style="left:1142.0px;top:1px;width:1px;height:68px;background:#d3d8df"></div>
<div class="a" style="left:1143px;top:0;width:18px;height:427px;background:linear-gradient(90deg,#fafafa 0,#fafafa 2px,#e9e9e9 3px,#f1f1f1 60%,#ececec)"></div>
<svg class="a" style="left:1143px;top:0" width="18" height="427" viewBox="0 0 18 427"><path d="M7.5 11.5 L11 7.5 L14.5 11.5 Z" fill="#333"/><path d="M7.5 416 L11 420 L14.5 416 Z" fill="#333"/></svg>
<div class="a" style="left:1145px;top:18px;width:15px;height:16px;border:1px solid #9a9a9a;border-radius:2px;background:linear-gradient(90deg,#f8f8f8,#ececec 45%,#d4d4d4)"></div>
</div>
<div class="a" style="left:87px;top:664px;width:84px;height:24px;border:1px solid #8eb1de;border-bottom:none;border-radius:4px 4px 0 0;background:linear-gradient(#e6f0fc,#c9ddf6)"></div>
<div class="a" style="left:99.5px;top:671px;font-size:11px;color:#111">Результаты</div>
<div class="a" style="left:76px;top:1123px;width:1171px;height:1px;background:#6d8cb6"></div>
<div class="a" style="left:76px;top:1124px;width:1171px;height:18px;background:#fff"></div>
<div class="a sp" style="left:77px;width:99px"></div>
<div class="a sp" style="left:178px;width:168px"></div>
<div class="a sp" style="left:347px;width:747px"></div>
<div class="a sp" style="left:1096px;width:136px"></div>
<div class="a" style="left:80px;top:1126px;font-size:12px;color:#111">Запись №</div>
<div class="a" style="left:180.5px;top:1126px;font-size:12px;color:#111">Всего записей:</div>
<div class="a" style="left:350px;top:1126px;font-size:12px;color:#111">Итераций:</div>
<div class="a" style="left:1178.5px;top:1126px;font-size:12px;color:#111">13:34:37</div>
<svg class="a" style="left:1232px;top:1128px" width="12" height="12" viewBox="0 0 12 12"><g fill="#555"><rect x="9" y="1" width="2" height="2"/><rect x="9" y="5" width="2" height="2"/><rect x="9" y="9" width="2" height="2"/><rect x="5" y="5" width="2" height="2"/><rect x="5" y="9" width="2" height="2"/><rect x="1" y="9" width="2" height="2"/></g></svg>
<!--/DLG-->

<div class="a" style="left:62px;top:1169px;width:1243px;height:4px;background:linear-gradient(#8db0de 0%,#8db0de 25%,#c9ddf6 26%,#c9ddf6 100%)"></div>
<div class="a" style="left:0;top:1173px;width:1305px;height:25px;background:linear-gradient(#5b7ba8 0px,#5b7ba8 1px,#ffffff 1px,#ffffff 11px,#c9c9c9 15px,#e2e2e2 21px,#f6f6f6 25px)"></div>
<div class="a" style="left:0;top:1173px;width:1px;height:25px;background:#4a6a9a"></div>
<div class="a bb dk" style="left:29px"></div>
<div class="a bb dk" style="left:56px"></div>
<div class="a bb" style="left:82px"></div>
<div class="a bb dk" style="left:109px"></div>
<div class="a bb" style="left:136px"></div>
<div class="a bb dk" style="left:163px"></div>
<div class="a bb" style="left:190px"></div>
<div class="a bb" style="left:217px"></div>
<div class="a bb" style="left:244px"></div>
<svg class="a" style="left:0;top:1170px" width="280" height="28" viewBox="0 0 280 28" font-family="Liberation Sans">
 <g stroke="#000" stroke-width="1.1"><path d="M31.799999999999997 9.6 L35.0 9.6 M33.4 8.0 L33.4 11.2"/><path d="M31.799999999999997 13.5 L35.0 13.5 M33.4 11.9 L33.4 15.1"/><path d="M31.799999999999997 17.6 L35.0 17.6 M33.4 16.0 L33.4 19.200000000000003"/><path d="M31.799999999999997 21.5 L35.0 21.5 M33.4 19.9 L33.4 23.1"/><path d="M35.8 9.6 L39.0 9.6 M37.4 8.0 L37.4 11.2"/><path d="M35.8 13.5 L39.0 13.5 M37.4 11.9 L37.4 15.1"/><path d="M35.8 17.6 L39.0 17.6 M37.4 16.0 L37.4 19.200000000000003"/><path d="M35.8 21.5 L39.0 21.5 M37.4 19.9 L37.4 23.1"/><path d="M39.9 9.6 L43.1 9.6 M41.5 8.0 L41.5 11.2"/><path d="M39.9 13.5 L43.1 13.5 M41.5 11.9 L41.5 15.1"/><path d="M39.9 17.6 L43.1 17.6 M41.5 16.0 L41.5 19.200000000000003"/><path d="M39.9 21.5 L43.1 21.5 M41.5 19.9 L41.5 23.1"/><path d="M43.9 9.6 L47.1 9.6 M45.5 8.0 L45.5 11.2"/><path d="M43.9 13.5 L47.1 13.5 M45.5 11.9 L45.5 15.1"/><path d="M43.9 17.6 L47.1 17.6 M45.5 16.0 L45.5 19.200000000000003"/><path d="M43.9 21.5 L47.1 21.5 M45.5 19.9 L45.5 23.1"/></g>
 <g fill="#222"><rect x="59" y="12" width="1" height="1"/><rect x="72" y="12" width="1" height="1"/><rect x="59" y="19" width="1" height="1"/><rect x="72" y="19" width="1" height="1"/>
 <rect x="62" y="9" width="1" height="1"/><rect x="69" y="9" width="1" height="1"/><rect x="62" y="22" width="1" height="1"/><rect x="69" y="22" width="1" height="1"/>
 <rect x="65" y="12" width="2" height="1"/><rect x="65" y="19" width="2" height="1"/><rect x="62" y="15" width="1" height="2"/><rect x="69" y="15" width="1" height="2"/></g>
 <g stroke="#ff0000" stroke-width="1.2"><path d="M60.9 12.5 L64.1 12.5 M62.5 10.9 L62.5 14.1 M67.9 12.5 L71.1 12.5 M69.5 10.9 L69.5 14.1 M60.9 19.5 L64.1 19.5 M62.5 17.9 L62.5 21.1 M67.9 19.5 L71.1 19.5 M69.5 17.9 L69.5 21.1"/></g>
 <g stroke="#e00000" stroke-width="1.1" fill="none"><circle cx="92.5" cy="15" r="3.8"/><path d="M88 10.5 L97 19.5 M97 10.5 L88 19.5"/></g>
 <text x="114" y="11" font-size="5.5" font-weight="bold" fill="#111" textLength="10" lengthAdjust="spacingAndGlyphs">100</text>
 <text x="117.5" y="16.5" font-size="5.5" font-weight="bold" fill="#111">x</text>
 <text x="114.5" y="22.5" font-size="5.5" font-weight="bold" fill="#111" textLength="11" lengthAdjust="spacingAndGlyphs">200</text>
 <path d="M140 7.5 L140 21.5 L153 21.5 M140 16.5 L144 16.5 L144 21.5" stroke="#111" stroke-width="1" fill="none"/>
 <path d="M166 12 L172 7 L181 7 M166 22 L181 22 L181 18" stroke="#888" stroke-width="0.8" fill="none"/>
 <path d="M166 20 L170 14 L175 14 L180 9" stroke="#111" stroke-width="1.2" fill="none"/>
 <path d="M168 17 L168 21 M172 14 L172 20 M176 13 L176 19" stroke="#00d000" stroke-width="1.5"/>
 <text x="195" y="11.5" font-size="5.5" font-weight="bold" fill="#1030d0" textLength="12" lengthAdjust="spacingAndGlyphs">100</text>
 <path d="M193 14.5 L207 14.5 M194 14.5 L194 21" stroke="#111" stroke-width="1"/>
 <text x="196" y="20.5" font-size="5.5" font-weight="bold" fill="#1030d0" textLength="7" lengthAdjust="spacingAndGlyphs">50</text>
 <text x="219.5" y="20" font-size="12" font-weight="bold" fill="#0a5a12" textLength="15" lengthAdjust="spacingAndGlyphs">№</text>
 <text x="247" y="11" font-size="6.5" font-weight="bold" fill="#111" textLength="15" lengthAdjust="spacingAndGlyphs">+100</text>
 <path d="M251 20 L251 13 L262 13 M247 22 L258 22 M251 21 L249 17 M251 21 L253 17" stroke="#111" stroke-width="1.1" fill="none"/>
</svg>
<div class="a" style="left:287px;top:1176px;width:197px;height:17px;background:#000;border:1px solid #c8c8c8"></div>
<div class="a" style="left:290px;top:1179px;font-size:11px;color:#2ee82e">Главный слой</div>
<div class="a" style="left:469px;top:1177px;width:14px;height:15px;background:linear-gradient(#f2f2f2,#d8d8d8);border-left:1px solid #aaa"></div>
<svg class="a" style="left:471px;top:1182px" width="10" height="6"><path d="M1 1 L9 1 L5 5 Z" fill="#111"/></svg>
<div class="a" style="left:1160px;top:1158px;width:145px;height:16px;border-radius:50%;background:radial-gradient(ellipse at 50% 100%,rgba(255,255,255,0.85) 0%,rgba(255,255,255,0.4) 45%,rgba(255,255,255,0) 75%)"></div>
<div class="a" style="left:1165px;top:1166px;width:140px;height:14px;background:radial-gradient(ellipse 50% 50% at 50% 50%,#ffffff 0%,#ffffff 55%,rgba(255,255,255,0) 100%)"></div>
<div class="a" style="left:1176px;top:1170px;font-size:13.5px;font-weight:bold;color:#2233bb;letter-spacing:0.3px">WWW.POTOK.RU</div>

</body></html>
